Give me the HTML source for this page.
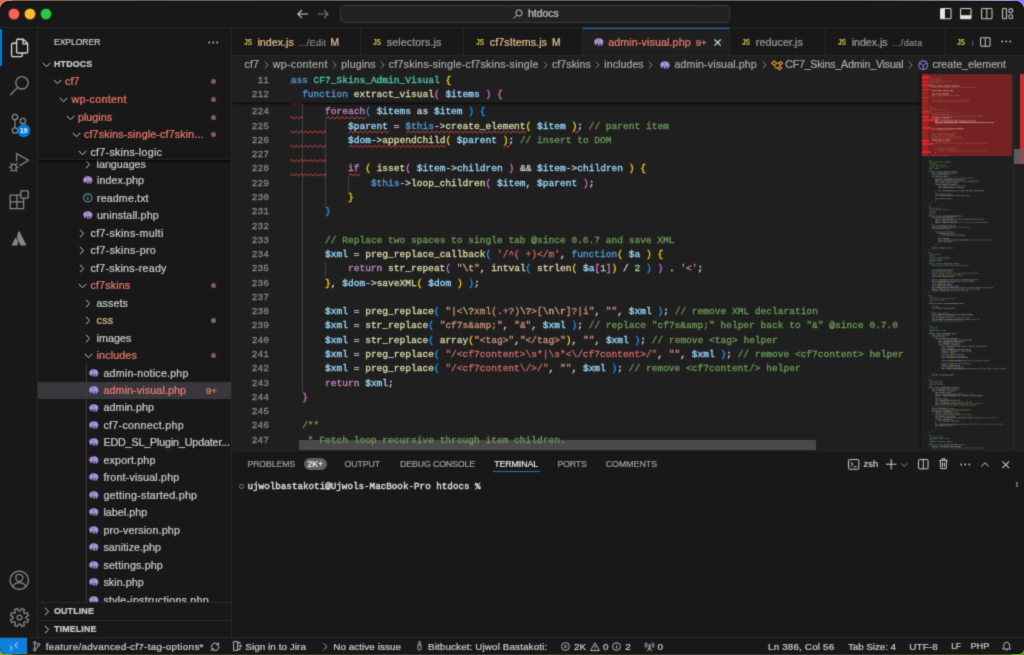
<!DOCTYPE html>
<html><head><meta charset="utf-8"><title>htdocs</title>
<style>
*{box-sizing:border-box;margin:0;padding:0}
html,body{width:1024px;height:655px;overflow:hidden;background:#1b1b1b}
body{font-family:"Liberation Sans",sans-serif;font-size:10.3px;color:#cccccc;position:relative;-webkit-font-smoothing:antialiased;-webkit-text-stroke:0.22px}
#wall{position:absolute;left:0;top:0;width:1024px;height:655px;
 background:linear-gradient(to right,#8a5a52 0px,#6e5a5a 60px,#5e5a60 300px,#5c5c66 700px,#66667e 900px,#8c8cae 985px,#9a9cc8 1010px,#7a80e0 1024px);}
#wall:after{content:"";position:absolute;left:0;top:600px;width:1024px;height:55px;background:linear-gradient(to right,#3f5f28 0px,#2c3d1c 40px,#2a3a1a 900px,#36521f 1000px,#4a7a25 1024px)}
.corner{position:absolute;width:12px;height:12px}
#win{position:absolute;left:0px;top:1px;width:1024px;height:653px;background:#1f1f1f;border-radius:9px 9px 6px 6px;overflow:hidden;filter:url(#soft)}
.abs{position:absolute}
svg{display:block;overflow:visible}
/* title bar */
#titlebar{position:absolute;left:0;top:0;width:1024px;height:27px;background:#181818;border-bottom:1px solid #282828}
.tl{position:absolute;top:8px;width:10px;height:10px;border-radius:50%}
#cmd{position:absolute;left:340px;top:4px;width:390px;height:18px;border:1px solid #3a3a3a;border-radius:5px;background:#222222}
/* activity bar */
#activity{position:absolute;left:0;top:27px;width:38px;height:609px;background:#181818;border-right:1px solid #282828}
/* status */
#status{position:absolute;left:0;top:636px;width:1024px;height:18px;background:#181818;border-top:1px solid #282828;font-size:10.2px;color:#cccccc;white-space:nowrap}
#status .it{position:absolute;top:0;height:17px;line-height:17px;font-size:9.9px}
/* sidebar */
#sidebar{position:absolute;left:38px;top:27px;width:194px;height:609px;background:#181818;border-right:1px solid #282828;overflow:hidden}
#treeclip{position:absolute;left:0;top:0;width:193px;height:574.5px;overflow:hidden}
#sticky{position:absolute;left:0;top:27px;width:193px;height:105.2px;background:#181818;box-shadow:0 1.5px 2px rgba(0,0,0,0.55);border-bottom:1px solid #232323}
#sticky .row{margin-top:-27px}
.row{position:absolute;left:0;width:193px;height:17.5px;white-space:nowrap}
.row .lbl,.lbl{position:absolute;top:0;line-height:17.4px;font-size:10.7px;letter-spacing:0.25px}
.lbl.hd{font-size:8.9px;letter-spacing:0.15px}
.row .ch{position:absolute;left:0;top:6px}
.row .ch.cr{left:1.5px;top:4.2px}
.row .ic{position:absolute;left:0;top:4.1px}
.row .dot{position:absolute;left:173px;top:6.2px;width:5px;height:5px;border-radius:50%}
/* tabs */
#tabs{position:absolute;left:232px;top:27px;width:792px;height:28px;background:#181818;border-bottom:1px solid #282828;white-space:nowrap;overflow:hidden}
.tab{position:absolute;top:0;height:28px;border-right:1px solid #282828;background:#181818}
.tab.act{background:#1f1f1f;border-top:1px solid #1b72bd;height:28px}
#tabs .js{position:absolute;top:0;line-height:28.6px;font-size:9.2px;font-weight:bold;color:#cbcb41;letter-spacing:-0.3px;-webkit-text-stroke:0;transform:scaleX(0.74);transform-origin:left center}
#tabs .tl2{position:absolute;top:0;line-height:29px;font-size:10.7px;letter-spacing:0.25px}
#tabs .td{position:absolute;top:0;line-height:30px;font-size:8.9px;color:#8a8a8a;letter-spacing:0.15px}
/* breadcrumb */
#bc{position:absolute;left:232px;top:55px;width:792px;height:18px;background:#1f1f1f;white-space:nowrap;overflow:hidden}
#bc .b{position:absolute;top:0;line-height:17.4px;font-size:10.6px;color:#a9a9a9}
#bc .sep{position:absolute;top:5.6px;width:5px;height:8px}
#bc .sep:before{content:"";position:absolute;left:-1px;top:1.2px;width:4.6px;height:4.6px;border-right:1px solid #8c8c8c;border-top:1px solid #8c8c8c;transform:rotate(45deg)}
/* minimap */
#minimap{position:absolute;left:921px;top:73px;width:92px;height:376px;background:#1f1f1f;overflow:hidden;box-shadow:-1px 0 1.5px rgba(0,0,0,0.45)}
#vscroll{position:absolute;left:1012.5px;top:73px;width:11.5px;height:376px;background:#1f1f1f;border-left:1px solid #2a2a2a}
/* panel */
#panel{position:absolute;left:232px;top:448.5px;width:792px;height:188px;background:#181818;border-top:1px solid #232323;overflow:hidden;white-space:nowrap}
#panel .pt{position:absolute;top:6.3px;line-height:14px;font-size:8.8px}

/* editor */
#editor{position:absolute;left:232px;top:73px;width:792px;height:376px;background:#1f1f1f;overflow:hidden;font-family:"Liberation Mono",monospace;font-size:9.558px;line-height:14.28px}
#gutter{position:absolute;left:0;top:0;width:57px;height:376px}
.ln{position:absolute;left:0;width:37px;text-align:right;color:#84878c;-webkit-text-stroke:0.3px;height:14.28px;white-space:pre}
#code{position:absolute;left:57.5px;top:0;width:631.5px;height:376px;overflow:hidden}
.cl{position:absolute;white-space:pre;color:#d4d4d4;height:14.28px;-webkit-text-stroke:0.3px}
.ig{position:absolute;width:0.8px}
#stickyed{position:absolute;left:0;top:0;width:689px;height:28.76px;background:#1f1f1f;box-shadow:0 1px 2px rgba(0,0,0,0.8);border-bottom:1px solid #161616}
#stcode{position:absolute;left:57.5px;top:0;width:631.5px;height:28.56px;overflow:hidden}

</style></head>
<body>
<svg width="0" height="0" style="position:absolute"><filter id="soft" x="0" y="0" width="100%" height="100%" color-interpolation-filters="sRGB"><feConvolveMatrix order="3" kernelMatrix="1 4 1 4 20 4 1 4 1" divisor="40" edgeMode="duplicate" preserveAlpha="true"/></filter></svg>
<div id="wall"></div>
<div class="corner" style="left:0;top:0;background:#d9735c"></div><div class="corner" style="right:0;top:0;background:#7f86f0"></div><div class="corner" style="left:0;bottom:0;background:#6fae3a"></div><div class="corner" style="right:0;bottom:0;background:#5a9a2c"></div>
<div id="win">
<div id="titlebar">
 <div class="tl" style="left:8.5px;background:#fe5f57;box-shadow:0 0 0 0.5px #d94b43"></div>
 <div class="tl" style="left:24.5px;background:#febc2e;box-shadow:0 0 0 0.5px #d69e20"></div>
 <div class="tl" style="left:40.5px;background:#28c840;box-shadow:0 0 0 0.5px #1ea230"></div>
 <svg class="abs" style="left:297px;top:8px" width="12" height="10" viewBox="0 0 12 10"><path d="M5 0.8 L0.9 5 L5 9.2 M1 5 H11" fill="none" stroke="#cccccc" stroke-width="1.1"/></svg>
 <svg class="abs" style="left:317px;top:8px" width="12" height="10" viewBox="0 0 12 10"><path d="M7 0.8 L11.1 5 L7 9.2 M11 5 H1" fill="none" stroke="#7a7a7a" stroke-width="1.1"/></svg>
 <div id="cmd"></div>
 <svg class="abs" style="left:513px;top:8px" width="10" height="10" viewBox="0 0 10 10"><circle cx="6" cy="4" r="3.1" fill="none" stroke="#cccccc" stroke-width="0.9"/><path d="M3.8 6.2 L0.6 9.4" stroke="#cccccc" stroke-width="0.9"/></svg>
 <div class="abs" style="left:528px;top:7px;font-size:10.4px;line-height:12px;color:#cccccc">htdocs</div>

 <svg class="abs" style="left:939.5px;top:6.9px" width="11.6" height="11.4" viewBox="0 0 11.6 11.4"><rect x="0.55" y="0.55" width="10.5" height="10.3" rx="1" fill="none" stroke="#d8d8d8" stroke-width="1.05"/><rect x="0.55" y="0.55" width="4.4" height="10.3" fill="#e6e6e6"/></svg>
 <svg class="abs" style="left:960.1px;top:6.9px" width="11.6" height="11.4" viewBox="0 0 11.6 11.4"><rect x="0.55" y="0.55" width="10.5" height="10.3" rx="1" fill="none" stroke="#d8d8d8" stroke-width="1.05"/><rect x="0.55" y="7.2" width="10.5" height="3.7" fill="#e6e6e6"/></svg>
 <svg class="abs" style="left:980.7px;top:6.9px" width="11.6" height="11.4" viewBox="0 0 11.6 11.4"><rect x="0.55" y="0.55" width="10.5" height="10.3" rx="1" fill="none" stroke="#c4c4c4" stroke-width="1.05"/><path d="M5.8 0.6 V10.8" stroke="#c4c4c4" stroke-width="1.05"/></svg>
 <svg class="abs" style="left:1001.8px;top:6.9px" width="11.4" height="11.4" viewBox="0 0 11.4 11.4"><rect x="0.55" y="0.55" width="3.9" height="10.3" rx="0.6" fill="none" stroke="#c4c4c4" stroke-width="1.05"/><rect x="6.9" y="0.9" width="3.7" height="3.7" rx="1.2" fill="none" stroke="#c4c4c4" stroke-width="1.05"/><rect x="6.9" y="6.8" width="3.7" height="3.7" rx="1.2" fill="none" stroke="#c4c4c4" stroke-width="1.05"/></svg>
</div>

<div id="activity">
 <div class="abs" style="left:0;top:1px;width:1.6px;height:37px;background:#0078d4"></div>
 <!-- explorer (files) -->
 <svg class="abs" style="left:9.5px;top:10px" width="19" height="20" viewBox="0 0 19 20"><path d="M7 1.2 H13.2 L17.6 5.6 V14 Q17.6 15 16.6 15 H7.6 Q6.6 15 6.6 14 V2.2 Q6.6 1.2 7.6 1.2 M13 1.4 V5.8 H17.4" fill="none" stroke="#d7d7d7" stroke-width="1.35" stroke-linejoin="round"/><path d="M6.4 5.2 H2.6 Q1.6 5.2 1.6 6.2 V17.6 Q1.6 18.6 2.6 18.6 H11.2 Q12.2 18.6 12.2 17.6 V15.2" fill="none" stroke="#d7d7d7" stroke-width="1.35" stroke-linejoin="round"/></svg>
 <!-- search -->
 <svg class="abs" style="left:9px;top:46px" width="21" height="22" viewBox="0 0 21 22"><circle cx="13" cy="8.8" r="6.2" fill="none" stroke="#868686" stroke-width="1.35"/><path d="M8.7 13.4 L1.3 21" stroke="#868686" stroke-width="1.35" fill="none"/></svg>
 <!-- source control -->
 <svg class="abs" style="left:9px;top:83px" width="24" height="28" viewBox="0 0 24 28"><circle cx="6" cy="6" r="2.7" fill="none" stroke="#868686" stroke-width="1.3"/><circle cx="6" cy="19.5" r="2.7" fill="none" stroke="#868686" stroke-width="1.3"/><circle cx="13.9" cy="10" r="2.7" fill="none" stroke="#868686" stroke-width="1.3"/><path d="M6 8.8 V16.8 M13.9 12.8 Q13.5 16 8.3 17.6" fill="none" stroke="#868686" stroke-width="1.3"/><circle cx="14.8" cy="19.6" r="6.6" fill="#0078d4"/><text x="14.8" y="22.1" font-family="Liberation Sans" font-size="6.8" font-weight="bold" fill="#ffffff" text-anchor="middle">19</text></svg>
 <!-- run and debug -->
 <svg class="abs" style="left:8px;top:123px" width="24" height="24" viewBox="0 0 24 24"><path d="M8.6 10.2 V2.6 L20.6 9.3 L11.6 14.6" fill="none" stroke="#868686" stroke-width="1.3" stroke-linejoin="round"/><ellipse cx="5.8" cy="16.4" rx="2.6" ry="3.3" fill="none" stroke="#868686" stroke-width="1.2"/><path d="M3.6 13.6 L2.2 12.2 M8 13.6 L9.4 12.2 M3.2 16.4 H1 M8.4 16.4 H10.6 M3.6 19 L2.2 20.6 M8 19 L9.4 20.6" stroke="#868686" stroke-width="1.1" fill="none"/></svg>
 <!-- extensions -->
 <svg class="abs" style="left:9px;top:162px" width="21" height="20" viewBox="0 0 21 20"><path d="M1.2 5.2 H14.6 V18.6 H1.2 Z M7.9 5.2 V18.6 M1.2 11.9 H14.6" fill="none" stroke="#868686" stroke-width="1.3"/><rect x="11.8" y="0.8" width="7.4" height="7.4" rx="0.6" fill="#181818" stroke="#868686" stroke-width="1.3"/></svg>
 <!-- atlassian -->
 <svg class="abs" style="left:11px;top:203px" width="16" height="15" viewBox="0 0 16 15"><path d="M5.1 6.7 C4.85 6.4 4.45 6.45 4.3 6.75 L0.7 13.9 C0.55 14.2 0.75 14.5 1.05 14.5 H6 C6.2 14.5 6.35 14.4 6.4 14.25 C7.5 12.05 6.85 8.7 5.1 6.7 Z" fill="#868686"/><path d="M7.7 0.5 C5.7 3.6 5.85 7.05 7.15 9.65 L9.55 14.25 C9.65 14.4 9.8 14.5 9.95 14.5 H14.95 C15.3 14.5 15.45 14.2 15.3 13.9 L8.5 0.5 C8.35 0.2 7.9 0.2 7.7 0.5 Z" fill="#868686"/></svg>
 <!-- account -->
 <svg class="abs" style="left:9px;top:542px" width="21" height="21" viewBox="0 0 21 21"><circle cx="10.3" cy="10.3" r="9.2" fill="none" stroke="#868686" stroke-width="1.3"/><circle cx="10.3" cy="7.8" r="3.5" fill="none" stroke="#868686" stroke-width="1.3"/><path d="M3.9 16.8 C5 13.2 7.6 12.6 10.3 12.6 C13 12.6 15.6 13.2 16.7 16.8" fill="none" stroke="#868686" stroke-width="1.3"/></svg>
 <!-- settings gear -->
 <svg class="abs" style="left:8.5px;top:579.4px" width="21" height="21" viewBox="-10.5 -10.5 21 21"><g fill="none" stroke="#868686" stroke-width="1.3" stroke-linejoin="round"><path d="M6.54 0.87 L9.07 2.05 L7.87 4.96 L5.24 4.01 L4.01 5.24 L4.96 7.87 L2.05 9.07 L0.87 6.54 L-0.87 6.54 L-2.05 9.07 L-4.96 7.87 L-4.01 5.24 L-5.24 4.01 L-7.87 4.96 L-9.07 2.05 L-6.54 0.87 L-6.54 -0.87 L-9.07 -2.05 L-7.87 -4.96 L-5.24 -4.01 L-4.01 -5.24 L-4.96 -7.87 L-2.05 -9.07 L-0.87 -6.54 L0.87 -6.54 L2.05 -9.07 L4.96 -7.87 L4.01 -5.24 L5.24 -4.01 L7.87 -4.96 L9.07 -2.05 L6.54 -0.87 Z"/><circle cx="0" cy="0" r="2.4"/></g></svg>
</div>

<div id="sidebar">
<div class="abs" style="left:16px;top:8px;font-size:8.5px;line-height:12px;color:#cccccc;letter-spacing:0px">EXPLORER</div>
<svg class="abs" style="left:170px;top:12.8px" width="11" height="3" viewBox="0 0 11 3"><circle cx="1.2" cy="1.5" r="0.9" fill="#c5c5c5"/><circle cx="5.2" cy="1.5" r="0.9" fill="#c5c5c5"/><circle cx="9.2" cy="1.5" r="0.9" fill="#c5c5c5"/></svg>
<div id="treeclip">
<div class="row" style="top:127.68px"><span class="abs" style="left:45.8px;top:0;width:9px;height:17.5px"><svg class="ch cr" width="6" height="9" viewBox="0 0 6 9"><path d="M0.9 0.8 L4.7 4.5 L0.9 8.2" fill="none" stroke="#c5c5c5" stroke-width="1"/></svg></span><span class="lbl" style="left:58.6px;color:#cccccc;letter-spacing:-0.003px">languages</span></div>
<div class="row" style="top:144.35px"><span class="abs" style="left:44.5px;top:0;width:9px;height:17.5px"><svg class="ic" width="9.6" height="7.6" viewBox="0.3 0.2 8.8 7.2" preserveAspectRatio="none"><path d="M0.5 4 C0.5 1.6 2.2 0.4 4.7 0.4 C7.2 0.4 8.9 1.6 8.9 4 V5.4 H7.9 V7.2 H6.3 V4.9 H5.5 V7.2 H3.9 V4.9 H3.1 V5.6 C3.1 6.6 2.4 7.1 1.6 6.9 V5.9 C1 5.7 0.5 5 0.5 4 Z" fill="#ad92dc"/><path d="M3.4 1.5 C4.9 1.7 5 3.7 3.7 4.3" fill="none" stroke="#3a3050" stroke-width="0.55" opacity="0.7"/></svg></span><span class="lbl" style="left:59.0px;color:#cccccc;letter-spacing:0.071px">index.php</span></div>
<div class="row" style="top:161.82px"><span class="abs" style="left:44.5px;top:0;width:9px;height:17.5px"><svg class="ic" width="9.6" height="9.6" viewBox="0 0 9 9" style="top:3.6px"><circle cx="4.5" cy="4.5" r="3.9" fill="none" stroke="#5f9fbc" stroke-width="0.95"/><path d="M4.5 4 V6.8 M4.5 2.2 V3.1" stroke="#5f9fbc" stroke-width="1"/></svg></span><span class="lbl" style="left:59.0px;color:#cccccc;letter-spacing:0.120px">readme.txt</span></div>
<div class="row" style="top:179.29px"><span class="abs" style="left:44.5px;top:0;width:9px;height:17.5px"><svg class="ic" width="9.6" height="7.6" viewBox="0.3 0.2 8.8 7.2" preserveAspectRatio="none"><path d="M0.5 4 C0.5 1.6 2.2 0.4 4.7 0.4 C7.2 0.4 8.9 1.6 8.9 4 V5.4 H7.9 V7.2 H6.3 V4.9 H5.5 V7.2 H3.9 V4.9 H3.1 V5.6 C3.1 6.6 2.4 7.1 1.6 6.9 V5.9 C1 5.7 0.5 5 0.5 4 Z" fill="#ad92dc"/><path d="M3.4 1.5 C4.9 1.7 5 3.7 3.7 4.3" fill="none" stroke="#3a3050" stroke-width="0.55" opacity="0.7"/></svg></span><span class="lbl" style="left:59.0px;color:#cccccc;letter-spacing:0.137px">uninstall.php</span></div>
<div class="row" style="top:196.76px"><span class="abs" style="left:39.5px;top:0;width:9px;height:17.5px"><svg class="ch cr" width="6" height="9" viewBox="0 0 6 9"><path d="M0.9 0.8 L4.7 4.5 L0.9 8.2" fill="none" stroke="#c5c5c5" stroke-width="1"/></svg></span><span class="lbl" style="left:52.5px;color:#cccccc;letter-spacing:0.320px">cf7-skins-multi</span></div>
<div class="row" style="top:214.23px"><span class="abs" style="left:39.5px;top:0;width:9px;height:17.5px"><svg class="ch cr" width="6" height="9" viewBox="0 0 6 9"><path d="M0.9 0.8 L4.7 4.5 L0.9 8.2" fill="none" stroke="#c5c5c5" stroke-width="1"/></svg></span><span class="lbl" style="left:52.5px;color:#cccccc;letter-spacing:0.341px">cf7-skins-pro</span></div>
<div class="row" style="top:231.70px"><span class="abs" style="left:39.5px;top:0;width:9px;height:17.5px"><svg class="ch cr" width="6" height="9" viewBox="0 0 6 9"><path d="M0.9 0.8 L4.7 4.5 L0.9 8.2" fill="none" stroke="#c5c5c5" stroke-width="1"/></svg></span><span class="lbl" style="left:52.5px;color:#cccccc;letter-spacing:0.249px">cf7-skins-ready</span></div>
<div class="row" style="top:249.17px"><span class="abs" style="left:39.5px;top:0;width:9px;height:17.5px"><svg class="ch" width="9" height="6" viewBox="0 0 9 6"><path d="M0.8 0.9 L4.5 4.7 L8.2 0.9" fill="none" stroke="#c5c5c5" stroke-width="1"/></svg></span><span class="lbl" style="left:52.5px;color:#f07c6e;letter-spacing:0.149px">cf7skins</span><span class="dot" style="background:#8a5a52"></span></div>
<div class="row" style="top:266.64px"><span class="abs" style="left:45.8px;top:0;width:9px;height:17.5px"><svg class="ch cr" width="6" height="9" viewBox="0 0 6 9"><path d="M0.9 0.8 L4.7 4.5 L0.9 8.2" fill="none" stroke="#c5c5c5" stroke-width="1"/></svg></span><span class="lbl" style="left:58.6px;color:#cccccc;letter-spacing:0.068px">assets</span></div>
<div class="row" style="top:284.11px"><span class="abs" style="left:45.8px;top:0;width:9px;height:17.5px"><svg class="ch cr" width="6" height="9" viewBox="0 0 6 9"><path d="M0.9 0.8 L4.7 4.5 L0.9 8.2" fill="none" stroke="#c5c5c5" stroke-width="1"/></svg></span><span class="lbl" style="left:58.6px;color:#e2c08d;letter-spacing:0.190px">css</span><span class="dot" style="background:#7a6f5d"></span></div>
<div class="row" style="top:301.58px"><span class="abs" style="left:45.8px;top:0;width:9px;height:17.5px"><svg class="ch cr" width="6" height="9" viewBox="0 0 6 9"><path d="M0.9 0.8 L4.7 4.5 L0.9 8.2" fill="none" stroke="#c5c5c5" stroke-width="1"/></svg></span><span class="lbl" style="left:58.6px;color:#cccccc;letter-spacing:0.041px">images</span></div>
<div class="row" style="top:319.05px"><span class="abs" style="left:45.5px;top:0;width:9px;height:17.5px"><svg class="ch" width="9" height="6" viewBox="0 0 9 6"><path d="M0.8 0.9 L4.5 4.7 L8.2 0.9" fill="none" stroke="#c5c5c5" stroke-width="1"/></svg></span><span class="lbl" style="left:58.6px;color:#f07c6e;letter-spacing:0.135px">includes</span><span class="dot" style="background:#8a5a52"></span></div>
<div class="row" style="top:336.52px"><span class="abs" style="left:50.7px;top:0;width:9px;height:17.5px"><svg class="ic" width="9.6" height="7.6" viewBox="0.3 0.2 8.8 7.2" preserveAspectRatio="none"><path d="M0.5 4 C0.5 1.6 2.2 0.4 4.7 0.4 C7.2 0.4 8.9 1.6 8.9 4 V5.4 H7.9 V7.2 H6.3 V4.9 H5.5 V7.2 H3.9 V4.9 H3.1 V5.6 C3.1 6.6 2.4 7.1 1.6 6.9 V5.9 C1 5.7 0.5 5 0.5 4 Z" fill="#ad92dc"/><path d="M3.4 1.5 C4.9 1.7 5 3.7 3.7 4.3" fill="none" stroke="#3a3050" stroke-width="0.55" opacity="0.7"/></svg></span><span class="lbl" style="left:65.4px;color:#cccccc;letter-spacing:0.206px">admin-notice.php</span></div>
<div class="abs" style="left:0;top:353.99px;width:193px;height:17.5px;background:#37373d"></div>
<div class="row" style="top:353.99px"><span class="abs" style="left:50.7px;top:0;width:9px;height:17.5px"><svg class="ic" width="9.6" height="7.6" viewBox="0.3 0.2 8.8 7.2" preserveAspectRatio="none"><path d="M0.5 4 C0.5 1.6 2.2 0.4 4.7 0.4 C7.2 0.4 8.9 1.6 8.9 4 V5.4 H7.9 V7.2 H6.3 V4.9 H5.5 V7.2 H3.9 V4.9 H3.1 V5.6 C3.1 6.6 2.4 7.1 1.6 6.9 V5.9 C1 5.7 0.5 5 0.5 4 Z" fill="#ad92dc"/><path d="M3.4 1.5 C4.9 1.7 5 3.7 3.7 4.3" fill="none" stroke="#3a3050" stroke-width="0.55" opacity="0.7"/></svg></span><span class="lbl" style="left:65.4px;color:#f07c6e;letter-spacing:0.125px">admin-visual.php</span><span class="abs" style="left:168px;top:0;line-height:17.5px;font-size:9.6px;color:#f07c6e">9+</span></div>
<div class="row" style="top:371.46px"><span class="abs" style="left:50.7px;top:0;width:9px;height:17.5px"><svg class="ic" width="9.6" height="7.6" viewBox="0.3 0.2 8.8 7.2" preserveAspectRatio="none"><path d="M0.5 4 C0.5 1.6 2.2 0.4 4.7 0.4 C7.2 0.4 8.9 1.6 8.9 4 V5.4 H7.9 V7.2 H6.3 V4.9 H5.5 V7.2 H3.9 V4.9 H3.1 V5.6 C3.1 6.6 2.4 7.1 1.6 6.9 V5.9 C1 5.7 0.5 5 0.5 4 Z" fill="#ad92dc"/><path d="M3.4 1.5 C4.9 1.7 5 3.7 3.7 4.3" fill="none" stroke="#3a3050" stroke-width="0.55" opacity="0.7"/></svg></span><span class="lbl" style="left:65.4px;color:#cccccc;letter-spacing:0.075px">admin.php</span></div>
<div class="row" style="top:388.93px"><span class="abs" style="left:50.7px;top:0;width:9px;height:17.5px"><svg class="ic" width="9.6" height="7.6" viewBox="0.3 0.2 8.8 7.2" preserveAspectRatio="none"><path d="M0.5 4 C0.5 1.6 2.2 0.4 4.7 0.4 C7.2 0.4 8.9 1.6 8.9 4 V5.4 H7.9 V7.2 H6.3 V4.9 H5.5 V7.2 H3.9 V4.9 H3.1 V5.6 C3.1 6.6 2.4 7.1 1.6 6.9 V5.9 C1 5.7 0.5 5 0.5 4 Z" fill="#ad92dc"/><path d="M3.4 1.5 C4.9 1.7 5 3.7 3.7 4.3" fill="none" stroke="#3a3050" stroke-width="0.55" opacity="0.7"/></svg></span><span class="lbl" style="left:65.4px;color:#cccccc;letter-spacing:0.302px">cf7-connect.php</span></div>
<div class="row" style="top:406.40px"><span class="abs" style="left:50.7px;top:0;width:9px;height:17.5px"><svg class="ic" width="9.6" height="7.6" viewBox="0.3 0.2 8.8 7.2" preserveAspectRatio="none"><path d="M0.5 4 C0.5 1.6 2.2 0.4 4.7 0.4 C7.2 0.4 8.9 1.6 8.9 4 V5.4 H7.9 V7.2 H6.3 V4.9 H5.5 V7.2 H3.9 V4.9 H3.1 V5.6 C3.1 6.6 2.4 7.1 1.6 6.9 V5.9 C1 5.7 0.5 5 0.5 4 Z" fill="#ad92dc"/><path d="M3.4 1.5 C4.9 1.7 5 3.7 3.7 4.3" fill="none" stroke="#3a3050" stroke-width="0.55" opacity="0.7"/></svg></span><span class="lbl" style="left:65.4px;color:#cccccc;letter-spacing:-0.130px">EDD_SL_Plugin_Updater...</span></div>
<div class="row" style="top:423.87px"><span class="abs" style="left:50.7px;top:0;width:9px;height:17.5px"><svg class="ic" width="9.6" height="7.6" viewBox="0.3 0.2 8.8 7.2" preserveAspectRatio="none"><path d="M0.5 4 C0.5 1.6 2.2 0.4 4.7 0.4 C7.2 0.4 8.9 1.6 8.9 4 V5.4 H7.9 V7.2 H6.3 V4.9 H5.5 V7.2 H3.9 V4.9 H3.1 V5.6 C3.1 6.6 2.4 7.1 1.6 6.9 V5.9 C1 5.7 0.5 5 0.5 4 Z" fill="#ad92dc"/><path d="M3.4 1.5 C4.9 1.7 5 3.7 3.7 4.3" fill="none" stroke="#3a3050" stroke-width="0.55" opacity="0.7"/></svg></span><span class="lbl" style="left:65.4px;color:#cccccc;letter-spacing:0.168px">export.php</span></div>
<div class="row" style="top:441.34px"><span class="abs" style="left:50.7px;top:0;width:9px;height:17.5px"><svg class="ic" width="9.6" height="7.6" viewBox="0.3 0.2 8.8 7.2" preserveAspectRatio="none"><path d="M0.5 4 C0.5 1.6 2.2 0.4 4.7 0.4 C7.2 0.4 8.9 1.6 8.9 4 V5.4 H7.9 V7.2 H6.3 V4.9 H5.5 V7.2 H3.9 V4.9 H3.1 V5.6 C3.1 6.6 2.4 7.1 1.6 6.9 V5.9 C1 5.7 0.5 5 0.5 4 Z" fill="#ad92dc"/><path d="M3.4 1.5 C4.9 1.7 5 3.7 3.7 4.3" fill="none" stroke="#3a3050" stroke-width="0.55" opacity="0.7"/></svg></span><span class="lbl" style="left:65.4px;color:#cccccc;letter-spacing:0.189px">front-visual.php</span></div>
<div class="row" style="top:458.81px"><span class="abs" style="left:50.7px;top:0;width:9px;height:17.5px"><svg class="ic" width="9.6" height="7.6" viewBox="0.3 0.2 8.8 7.2" preserveAspectRatio="none"><path d="M0.5 4 C0.5 1.6 2.2 0.4 4.7 0.4 C7.2 0.4 8.9 1.6 8.9 4 V5.4 H7.9 V7.2 H6.3 V4.9 H5.5 V7.2 H3.9 V4.9 H3.1 V5.6 C3.1 6.6 2.4 7.1 1.6 6.9 V5.9 C1 5.7 0.5 5 0.5 4 Z" fill="#ad92dc"/><path d="M3.4 1.5 C4.9 1.7 5 3.7 3.7 4.3" fill="none" stroke="#3a3050" stroke-width="0.55" opacity="0.7"/></svg></span><span class="lbl" style="left:65.4px;color:#cccccc;letter-spacing:0.251px">getting-started.php</span></div>
<div class="row" style="top:476.28px"><span class="abs" style="left:50.7px;top:0;width:9px;height:17.5px"><svg class="ic" width="9.6" height="7.6" viewBox="0.3 0.2 8.8 7.2" preserveAspectRatio="none"><path d="M0.5 4 C0.5 1.6 2.2 0.4 4.7 0.4 C7.2 0.4 8.9 1.6 8.9 4 V5.4 H7.9 V7.2 H6.3 V4.9 H5.5 V7.2 H3.9 V4.9 H3.1 V5.6 C3.1 6.6 2.4 7.1 1.6 6.9 V5.9 C1 5.7 0.5 5 0.5 4 Z" fill="#ad92dc"/><path d="M3.4 1.5 C4.9 1.7 5 3.7 3.7 4.3" fill="none" stroke="#3a3050" stroke-width="0.55" opacity="0.7"/></svg></span><span class="lbl" style="left:65.4px;color:#cccccc;letter-spacing:0.057px">label.php</span></div>
<div class="row" style="top:493.75px"><span class="abs" style="left:50.7px;top:0;width:9px;height:17.5px"><svg class="ic" width="9.6" height="7.6" viewBox="0.3 0.2 8.8 7.2" preserveAspectRatio="none"><path d="M0.5 4 C0.5 1.6 2.2 0.4 4.7 0.4 C7.2 0.4 8.9 1.6 8.9 4 V5.4 H7.9 V7.2 H6.3 V4.9 H5.5 V7.2 H3.9 V4.9 H3.1 V5.6 C3.1 6.6 2.4 7.1 1.6 6.9 V5.9 C1 5.7 0.5 5 0.5 4 Z" fill="#ad92dc"/><path d="M3.4 1.5 C4.9 1.7 5 3.7 3.7 4.3" fill="none" stroke="#3a3050" stroke-width="0.55" opacity="0.7"/></svg></span><span class="lbl" style="left:65.4px;color:#cccccc;letter-spacing:0.156px">pro-version.php</span></div>
<div class="row" style="top:511.22px"><span class="abs" style="left:50.7px;top:0;width:9px;height:17.5px"><svg class="ic" width="9.6" height="7.6" viewBox="0.3 0.2 8.8 7.2" preserveAspectRatio="none"><path d="M0.5 4 C0.5 1.6 2.2 0.4 4.7 0.4 C7.2 0.4 8.9 1.6 8.9 4 V5.4 H7.9 V7.2 H6.3 V4.9 H5.5 V7.2 H3.9 V4.9 H3.1 V5.6 C3.1 6.6 2.4 7.1 1.6 6.9 V5.9 C1 5.7 0.5 5 0.5 4 Z" fill="#ad92dc"/><path d="M3.4 1.5 C4.9 1.7 5 3.7 3.7 4.3" fill="none" stroke="#3a3050" stroke-width="0.55" opacity="0.7"/></svg></span><span class="lbl" style="left:65.4px;color:#cccccc;letter-spacing:0.054px">sanitize.php</span></div>
<div class="row" style="top:528.69px"><span class="abs" style="left:50.7px;top:0;width:9px;height:17.5px"><svg class="ic" width="9.6" height="7.6" viewBox="0.3 0.2 8.8 7.2" preserveAspectRatio="none"><path d="M0.5 4 C0.5 1.6 2.2 0.4 4.7 0.4 C7.2 0.4 8.9 1.6 8.9 4 V5.4 H7.9 V7.2 H6.3 V4.9 H5.5 V7.2 H3.9 V4.9 H3.1 V5.6 C3.1 6.6 2.4 7.1 1.6 6.9 V5.9 C1 5.7 0.5 5 0.5 4 Z" fill="#ad92dc"/><path d="M3.4 1.5 C4.9 1.7 5 3.7 3.7 4.3" fill="none" stroke="#3a3050" stroke-width="0.55" opacity="0.7"/></svg></span><span class="lbl" style="left:65.4px;color:#cccccc;letter-spacing:0.163px">settings.php</span></div>
<div class="row" style="top:546.16px"><span class="abs" style="left:50.7px;top:0;width:9px;height:17.5px"><svg class="ic" width="9.6" height="7.6" viewBox="0.3 0.2 8.8 7.2" preserveAspectRatio="none"><path d="M0.5 4 C0.5 1.6 2.2 0.4 4.7 0.4 C7.2 0.4 8.9 1.6 8.9 4 V5.4 H7.9 V7.2 H6.3 V4.9 H5.5 V7.2 H3.9 V4.9 H3.1 V5.6 C3.1 6.6 2.4 7.1 1.6 6.9 V5.9 C1 5.7 0.5 5 0.5 4 Z" fill="#ad92dc"/><path d="M3.4 1.5 C4.9 1.7 5 3.7 3.7 4.3" fill="none" stroke="#3a3050" stroke-width="0.55" opacity="0.7"/></svg></span><span class="lbl" style="left:65.4px;color:#cccccc;letter-spacing:0.073px">skin.php</span></div>
<div class="row" style="top:563.63px"><span class="abs" style="left:50.7px;top:0;width:9px;height:17.5px"><svg class="ic" width="9.6" height="7.6" viewBox="0.3 0.2 8.8 7.2" preserveAspectRatio="none"><path d="M0.5 4 C0.5 1.6 2.2 0.4 4.7 0.4 C7.2 0.4 8.9 1.6 8.9 4 V5.4 H7.9 V7.2 H6.3 V4.9 H5.5 V7.2 H3.9 V4.9 H3.1 V5.6 C3.1 6.6 2.4 7.1 1.6 6.9 V5.9 C1 5.7 0.5 5 0.5 4 Z" fill="#ad92dc"/><path d="M3.4 1.5 C4.9 1.7 5 3.7 3.7 4.3" fill="none" stroke="#3a3050" stroke-width="0.55" opacity="0.7"/></svg></span><span class="lbl" style="left:65.4px;color:#cccccc;letter-spacing:0.232px">style-instructions.php</span></div>
<div class="abs" style="left:48.3px;top:336.4px;width:0.8px;height:240px;background:#3c3c3c"></div>
</div>
<div id="sticky">
<div class="row" style="top:27.75px"><span class="abs" style="left:3.5px;top:0;width:9px;height:17.5px"><svg class="ch" width="9" height="6" viewBox="0 0 9 6"><path d="M0.8 0.9 L4.5 4.7 L8.2 0.9" fill="none" stroke="#c5c5c5" stroke-width="1"/></svg></span><span class="lbl hd" style="left:16.0px;color:#cccccc"><b>HTDOCS</b></span></div>
<div class="row" style="top:45.25px"><span class="abs" style="left:14.5px;top:0;width:9px;height:17.5px"><svg class="ch" width="9" height="6" viewBox="0 0 9 6"><path d="M0.8 0.9 L4.5 4.7 L8.2 0.9" fill="none" stroke="#c5c5c5" stroke-width="1"/></svg></span><span class="lbl" style="left:27.0px;color:#f07c6e;letter-spacing:0.078px">cf7</span><span class="dot" style="background:#8a5a52"></span></div>
<div class="row" style="top:62.90px"><span class="abs" style="left:21.0px;top:0;width:9px;height:17.5px"><svg class="ch" width="9" height="6" viewBox="0 0 9 6"><path d="M0.8 0.9 L4.5 4.7 L8.2 0.9" fill="none" stroke="#c5c5c5" stroke-width="1"/></svg></span><span class="lbl" style="left:33.5px;color:#f07c6e;letter-spacing:0.297px">wp-content</span><span class="dot" style="background:#8a5a52"></span></div>
<div class="row" style="top:80.55px"><span class="abs" style="left:27.5px;top:0;width:9px;height:17.5px"><svg class="ch" width="9" height="6" viewBox="0 0 9 6"><path d="M0.8 0.9 L4.5 4.7 L8.2 0.9" fill="none" stroke="#c5c5c5" stroke-width="1"/></svg></span><span class="lbl" style="left:40.0px;color:#f07c6e;letter-spacing:0.018px">plugins</span><span class="dot" style="background:#8a5a52"></span></div>
<div class="row" style="top:98.20px"><span class="abs" style="left:33.5px;top:0;width:9px;height:17.5px"><svg class="ch" width="9" height="6" viewBox="0 0 9 6"><path d="M0.8 0.9 L4.5 4.7 L8.2 0.9" fill="none" stroke="#c5c5c5" stroke-width="1"/></svg></span><span class="lbl" style="left:46.0px;color:#f07c6e;letter-spacing:0.151px">cf7skins-single-cf7skin...</span><span class="dot" style="background:#8a5a52"></span></div>
<div class="row" style="top:115.85px"><span class="abs" style="left:40.0px;top:0;width:9px;height:17.5px"><svg class="ch" width="9" height="6" viewBox="0 0 9 6"><path d="M0.8 0.9 L4.5 4.7 L8.2 0.9" fill="none" stroke="#c5c5c5" stroke-width="1"/></svg></span><span class="lbl" style="left:52.5px;color:#cccccc;letter-spacing:0.265px">cf7-skins-logic</span></div>
</div>
<div class="abs" style="left:0;top:574.3px;width:193px;height:18px;background:#181818;border-top:1px solid #2b2b2b"><svg class="abs" style="left:5.8px;top:3.6px" width="6" height="9" viewBox="0 0 6 9"><path d="M0.9 0.8 L4.7 4.5 L0.9 8.2" fill="none" stroke="#c5c5c5" stroke-width="1"/></svg><span class="lbl hd" style="left:16px;line-height:17px"><b>OUTLINE</b></span></div>
<div class="abs" style="left:0;top:592.0px;width:193px;height:18px;background:#181818;border-top:1px solid #2b2b2b"><svg class="abs" style="left:5.8px;top:3.6px" width="6" height="9" viewBox="0 0 6 9"><path d="M0.9 0.8 L4.7 4.5 L0.9 8.2" fill="none" stroke="#c5c5c5" stroke-width="1"/></svg><span class="lbl hd" style="left:16px;line-height:17px"><b>TIMELINE</b></span></div>
</div>
<div id="tabs">
<div class="tab" style="left:0px;width:128.5px"></div>
<div class="tab" style="left:128.5px;width:103px"></div>
<div class="tab" style="left:231.5px;width:119px"></div>
<div class="tab act" style="left:350.5px;width:147px"></div>
<div class="tab" style="left:497.5px;width:96.5px"></div>
<div class="tab" style="left:594px;width:119.5px"></div>
<div class="tab" style="left:713.5px;width:80px"></div>
<span class="js" style="left:11.50px">JS</span>
<span class="tl2" style="left:25.50px;color:#e2c08d;font-size:10.7px;letter-spacing:0.000px">index.js</span>
<span class="td" style="left:66.50px;color:#8a8a8a;font-size:8.9px;letter-spacing:0.324px">.../Edit</span>
<span class="tl2" style="left:98.50px;color:#e2c08d;font-size:10.2px;letter-spacing:-0.750px">M</span>
<span class="js" style="left:141.00px">JS</span>
<span class="tl2" style="left:154.75px;color:#9d9d9d;font-size:10.7px;letter-spacing:0.107px">selectors.js</span>
<span class="js" style="left:243.50px">JS</span>
<span class="tl2" style="left:257.75px;color:#e2c08d;font-size:10.7px;letter-spacing:0.069px">cf7sItems.js</span>
<span class="tl2" style="left:320.00px;color:#e2c08d;font-size:10.2px;letter-spacing:-1.000px">M</span>
<svg class="abs" style="left:361.8px;top:10.3px" width="9.6" height="7.6" viewBox="0.3 0.2 8.8 7.2" preserveAspectRatio="none"><path d="M0.5 4 C0.5 1.6 2.2 0.4 4.7 0.4 C7.2 0.4 8.9 1.6 8.9 4 V5.4 H7.9 V7.2 H6.3 V4.9 H5.5 V7.2 H3.9 V4.9 H3.1 V5.6 C3.1 6.6 2.4 7.1 1.6 6.9 V5.9 C1 5.7 0.5 5 0.5 4 Z" fill="#ad92dc"/><path d="M3.4 1.5 C4.9 1.7 5 3.7 3.7 4.3" fill="none" stroke="#3a3050" stroke-width="0.55" opacity="0.7"/></svg>
<span class="tl2" style="left:376.25px;color:#f07c6e;font-size:10.7px;letter-spacing:0.106px">admin-visual.php</span>
<span class="tl2" style="left:463.75px;color:#f07c6e;font-size:9.6px;letter-spacing:-0.102px">9+</span>
<svg class="abs" style="left:482.4px;top:10.6px" width="7.2" height="7.2" viewBox="0 0 7 7"><path d="M0.5 0.5 L6.5 6.5 M6.5 0.5 L0.5 6.5" stroke="#e0e0e0" stroke-width="1.1"/></svg>
<span class="js" style="left:510.00px">JS</span>
<span class="tl2" style="left:523.75px;color:#9d9d9d;font-size:10.7px;letter-spacing:0.091px">reducer.js</span>
<span class="js" style="left:606.00px">JS</span>
<span class="tl2" style="left:619.75px;color:#9d9d9d;font-size:10.7px;letter-spacing:-0.062px">index.js</span>
<span class="td" style="left:660.25px;color:#8a8a8a;font-size:8.9px;letter-spacing:0.389px">.../data</span>
<span class="js" style="left:725.25px">JS</span>
<svg class="abs" style="left:738.6px;top:12.2px" width="3.4" height="6" viewBox="0 0 3.4 6"><path d="M1.7 0 V5.2 M0.3 3.8 L1.7 5.4 L3.1 3.8" fill="none" stroke="#4f5f9a" stroke-width="0.8"/></svg>
<div class="abs" style="left:742px;top:0;width:50px;height:27px;background:#181818"></div>
<svg class="abs" style="left:748.2px;top:8.8px" width="10.6" height="9.8" viewBox="0 0 11 10"><rect x="0.6" y="0.6" width="9.8" height="8.8" rx="0.8" fill="none" stroke="#c4c4c4" stroke-width="1.05"/><path d="M5.5 0.6 V9.4" stroke="#c4c4c4" stroke-width="1.05"/></svg>
<svg class="abs" style="left:768.5px;top:12.3px" width="11" height="3" viewBox="0 0 11 3"><circle cx="1.2" cy="1.5" r="0.9" fill="#c5c5c5"/><circle cx="5.2" cy="1.5" r="0.9" fill="#c5c5c5"/><circle cx="9.2" cy="1.5" r="0.9" fill="#c5c5c5"/></svg>
</div>
<div id="bc">
<span class="b" style="left:12.50px;letter-spacing:0.120px">cf7</span>
<span class="b" style="left:40.75px;letter-spacing:0.317px">wp-content</span>
<span class="b" style="left:109.25px;letter-spacing:0.132px">plugins</span>
<span class="b" style="left:156.75px;letter-spacing:0.242px">cf7skins-single-cf7skins-single</span>
<span class="b" style="left:320.00px;letter-spacing:0.059px">cf7skins</span>
<span class="b" style="left:372.25px;letter-spacing:0.078px">includes</span>
<span class="b" style="left:442.50px;letter-spacing:0.144px">admin-visual.php</span>
<span class="b" style="left:553.20px;letter-spacing:-0.182px">CF7_Skins_Admin_Visual</span>
<span class="b" style="left:700.40px;letter-spacing:0.041px">create_element</span>
<svg class="abs" style="left:32.25px;top:5.2px" width="5" height="8" viewBox="0 0 5 8"><path d="M0.7 0.6 L4.1 4 L0.7 7.4" fill="none" stroke="#8c8c8c" stroke-width="0.95"/></svg>
<svg class="abs" style="left:100.40px;top:5.2px" width="5" height="8" viewBox="0 0 5 8"><path d="M0.7 0.6 L4.1 4 L0.7 7.4" fill="none" stroke="#8c8c8c" stroke-width="0.95"/></svg>
<svg class="abs" style="left:148.40px;top:5.2px" width="5" height="8" viewBox="0 0 5 8"><path d="M0.7 0.6 L4.1 4 L0.7 7.4" fill="none" stroke="#8c8c8c" stroke-width="0.95"/></svg>
<svg class="abs" style="left:311.40px;top:5.2px" width="5" height="8" viewBox="0 0 5 8"><path d="M0.7 0.6 L4.1 4 L0.7 7.4" fill="none" stroke="#8c8c8c" stroke-width="0.95"/></svg>
<svg class="abs" style="left:363.25px;top:5.2px" width="5" height="8" viewBox="0 0 5 8"><path d="M0.7 0.6 L4.1 4 L0.7 7.4" fill="none" stroke="#8c8c8c" stroke-width="0.95"/></svg>
<svg class="abs" style="left:416.40px;top:5.2px" width="5" height="8" viewBox="0 0 5 8"><path d="M0.7 0.6 L4.1 4 L0.7 7.4" fill="none" stroke="#8c8c8c" stroke-width="0.95"/></svg>
<svg class="abs" style="left:529.50px;top:5.2px" width="5" height="8" viewBox="0 0 5 8"><path d="M0.7 0.6 L4.1 4 L0.7 7.4" fill="none" stroke="#8c8c8c" stroke-width="0.95"/></svg>
<svg class="abs" style="left:676.35px;top:5.2px" width="5" height="8" viewBox="0 0 5 8"><path d="M0.7 0.6 L4.1 4 L0.7 7.4" fill="none" stroke="#8c8c8c" stroke-width="0.95"/></svg>
<svg class="abs" style="left:428px;top:5.2px" width="9.8" height="7.8" viewBox="0.3 0.2 8.8 7.2" preserveAspectRatio="none"><path d="M0.5 4 C0.5 1.6 2.2 0.4 4.7 0.4 C7.2 0.4 8.9 1.6 8.9 4 V5.4 H7.9 V7.2 H6.3 V4.9 H5.5 V7.2 H3.9 V4.9 H3.1 V5.6 C3.1 6.6 2.4 7.1 1.6 6.9 V5.9 C1 5.7 0.5 5 0.5 4 Z" fill="#ad92dc"/><path d="M3.4 1.5 C4.9 1.7 5 3.7 3.7 4.3" fill="none" stroke="#3a3050" stroke-width="0.55" opacity="0.7"/></svg>
<svg class="abs" style="left:538.8px;top:3.6px" width="12.4" height="11" viewBox="0 0 12.4 11"><path d="M0.8 3.2 L3.2 1 L5.6 3.2 L3.2 5.4 Z M5.6 3.2 H8 M7.6 3.2 L9.6 1.4 L11.6 3.2 L9.6 5 Z M3.8 5.2 Q3.8 8 6.6 8 M6.6 8 L8.6 6.2 L10.6 8 L8.6 9.8 Z" fill="none" stroke="#ee9d28" stroke-width="1.05"/></svg>
<svg class="abs" style="left:686px;top:4px" width="10.4" height="10.4" viewBox="0 0 11 11"><circle cx="5.5" cy="5.5" r="4.6" fill="none" stroke="#8f78dd" stroke-width="1.15"/><path d="M5.5 5.5 V10 M5.5 5.5 L1.6 3.2 M5.5 5.5 L9.4 3.2" fill="none" stroke="#8f78dd" stroke-width="1.05"/></svg>
</div>
<div id="editor">
<div id="gutter">
<div class="ln" style="top:16.98px">223</div>
<div class="ln" style="top:31.26px">224</div>
<div class="ln" style="top:45.54px">225</div>
<div class="ln" style="top:59.82px">226</div>
<div class="ln" style="top:74.10px">227</div>
<div class="ln" style="top:88.38px">228</div>
<div class="ln" style="top:102.66px">229</div>
<div class="ln" style="top:116.94px">230</div>
<div class="ln" style="top:131.22px">231</div>
<div class="ln" style="top:145.50px">232</div>
<div class="ln" style="top:159.78px">233</div>
<div class="ln" style="top:174.06px">234</div>
<div class="ln" style="top:188.34px">235</div>
<div class="ln" style="top:202.62px">236</div>
<div class="ln" style="top:216.90px">237</div>
<div class="ln" style="top:231.18px">238</div>
<div class="ln" style="top:245.46px">239</div>
<div class="ln" style="top:259.74px">240</div>
<div class="ln" style="top:274.02px">241</div>
<div class="ln" style="top:288.30px">242</div>
<div class="ln" style="top:302.58px">243</div>
<div class="ln" style="top:316.86px">244</div>
<div class="ln" style="top:331.14px">245</div>
<div class="ln" style="top:345.42px">246</div>
<div class="ln" style="top:359.70px">247</div>
<div class="ln" style="top:373.98px">248</div>
</div>
<div id="code">
<div class="ig" style="left:12.34px;top:16.98px;height:299.88px;background:#404040"></div>
<div class="ig" style="left:35.28px;top:45.54px;height:85.68px;background:#404040"></div>
<div class="ig" style="left:58.22px;top:102.66px;height:14.28px;background:#404040"></div>
<div class="ig" style="left:35.28px;top:188.34px;height:14.28px;background:#404040"></div>
<div class="cl" style="left:-10.30px;top:31.26px">        <span style="color:#c586c0">foreach</span><span style="color:#179fff">(</span> <span style="color:#9cdcfe">$items</span><span style="color:#d4d4d4"> as </span><span style="color:#9cdcfe">$item</span> <span style="color:#179fff">)</span> <span style="color:#179fff">{</span></div>
<div class="cl" style="left:-10.30px;top:45.54px">            <span style="color:#9cdcfe">$parent</span><span style="color:#d4d4d4"> = </span><span style="color:#569cd6">$this</span><span style="color:#d4d4d4">-&gt;</span><span style="color:#dcdcaa">create_element</span><span style="color:#ffd700">(</span> <span style="color:#9cdcfe">$item</span> <span style="color:#ffd700">)</span><span style="color:#d4d4d4">; </span><span style="color:#6a9955">// parent item</span></div>
<div class="cl" style="left:-10.30px;top:59.82px">            <span style="color:#9cdcfe">$dom</span><span style="color:#d4d4d4">-&gt;</span><span style="color:#dcdcaa">appendChild</span><span style="color:#ffd700">(</span> <span style="color:#9cdcfe">$parent</span> <span style="color:#ffd700">)</span><span style="color:#d4d4d4">; </span><span style="color:#6a9955">// insert to DOM</span></div>
<div class="cl" style="left:-10.30px;top:74.10px"></div>
<div class="cl" style="left:-10.30px;top:88.38px">            <span style="color:#c586c0">if</span> <span style="color:#ffd700">(</span> <span style="color:#dcdcaa">isset</span><span style="color:#da70d6">(</span> <span style="color:#9cdcfe">$item</span><span style="color:#d4d4d4">-&gt;</span><span style="color:#9cdcfe">children</span> <span style="color:#da70d6">)</span><span style="color:#d4d4d4"> &amp;&amp; </span><span style="color:#9cdcfe">$item</span><span style="color:#d4d4d4">-&gt;</span><span style="color:#9cdcfe">children</span> <span style="color:#ffd700">)</span> <span style="color:#ffd700">{</span></div>
<div class="cl" style="left:-10.30px;top:102.66px">                <span style="color:#569cd6">$this</span><span style="color:#d4d4d4">-&gt;</span><span style="color:#dcdcaa">loop_children</span><span style="color:#da70d6">(</span> <span style="color:#9cdcfe">$item</span><span style="color:#d4d4d4">, </span><span style="color:#9cdcfe">$parent</span> <span style="color:#da70d6">)</span><span style="color:#d4d4d4">;</span></div>
<div class="cl" style="left:-10.30px;top:116.94px">            <span style="color:#ffd700">}</span></div>
<div class="cl" style="left:-10.30px;top:131.22px">        <span style="color:#179fff">}</span></div>
<div class="cl" style="left:-10.30px;top:145.50px"></div>
<div class="cl" style="left:-10.30px;top:159.78px">        <span style="color:#6a9955">// Replace two spaces to single tab @since 0.6.7 and save XML</span></div>
<div class="cl" style="left:-10.30px;top:174.06px">        <span style="color:#9cdcfe">$xml</span><span style="color:#d4d4d4"> = </span><span style="color:#dcdcaa">preg_replace_callback</span><span style="color:#179fff">(</span> <span style="color:#d16969">&#x27;/^( +)&lt;/m&#x27;</span><span style="color:#d4d4d4">, </span><span style="color:#569cd6">function</span><span style="color:#ffd700">(</span> <span style="color:#9cdcfe">$a</span> <span style="color:#ffd700">)</span> <span style="color:#ffd700">{</span></div>
<div class="cl" style="left:-10.30px;top:188.34px">            <span style="color:#c586c0">return</span> <span style="color:#dcdcaa">str_repeat</span><span style="color:#da70d6">(</span> <span style="color:#ce9178">&quot;</span><span style="color:#d7ba7d">\t</span><span style="color:#ce9178">&quot;</span><span style="color:#d4d4d4">, </span><span style="color:#dcdcaa">intval</span><span style="color:#179fff">(</span> <span style="color:#dcdcaa">strlen</span><span style="color:#ffd700">(</span> <span style="color:#9cdcfe">$a</span><span style="color:#da70d6">[</span><span style="color:#b5cea8">1</span><span style="color:#da70d6">]</span><span style="color:#ffd700">)</span><span style="color:#d4d4d4"> / </span><span style="color:#b5cea8">2</span> <span style="color:#179fff">)</span> <span style="color:#da70d6">)</span><span style="color:#d4d4d4"> . </span><span style="color:#ce9178">&#x27;&lt;&#x27;</span><span style="color:#d4d4d4">;</span></div>
<div class="cl" style="left:-10.30px;top:202.62px">        <span style="color:#ffd700">}</span><span style="color:#d4d4d4">, </span><span style="color:#9cdcfe">$dom</span><span style="color:#d4d4d4">-&gt;</span><span style="color:#dcdcaa">saveXML</span><span style="color:#ffd700">(</span> <span style="color:#9cdcfe">$dom</span> <span style="color:#ffd700">)</span> <span style="color:#179fff">)</span><span style="color:#d4d4d4">;</span></div>
<div class="cl" style="left:-10.30px;top:216.90px"></div>
<div class="cl" style="left:-10.30px;top:231.18px">        <span style="color:#9cdcfe">$xml</span><span style="color:#d4d4d4"> = </span><span style="color:#dcdcaa">preg_replace</span><span style="color:#179fff">(</span> <span style="color:#ce9178">&quot;|&lt;</span><span style="color:#d7ba7d">\?</span><span style="color:#ce9178">xml(.+?)</span><span style="color:#d7ba7d">\?</span><span style="color:#ce9178">&gt;[</span><span style="color:#d7ba7d">\n\r</span><span style="color:#ce9178">]?|i&quot;</span><span style="color:#d4d4d4">, </span><span style="color:#ce9178">&quot;&quot;</span><span style="color:#d4d4d4">, </span><span style="color:#9cdcfe">$xml</span> <span style="color:#179fff">)</span><span style="color:#d4d4d4">; </span><span style="color:#6a9955">// remove XML declaration</span></div>
<div class="cl" style="left:-10.30px;top:245.46px">        <span style="color:#9cdcfe">$xml</span><span style="color:#d4d4d4"> = </span><span style="color:#dcdcaa">str_replace</span><span style="color:#179fff">(</span> <span style="color:#ce9178">&quot;cf7s&amp;amp;&quot;</span><span style="color:#d4d4d4">, </span><span style="color:#ce9178">&quot;&amp;&quot;</span><span style="color:#d4d4d4">, </span><span style="color:#9cdcfe">$xml</span> <span style="color:#179fff">)</span><span style="color:#d4d4d4">; </span><span style="color:#6a9955">// replace &quot;cf7s&amp;amp;&quot; helper back to &quot;&amp;&quot; @since 0.7.0</span></div>
<div class="cl" style="left:-10.30px;top:259.74px">        <span style="color:#9cdcfe">$xml</span><span style="color:#d4d4d4"> = </span><span style="color:#dcdcaa">str_replace</span><span style="color:#179fff">(</span> <span style="color:#dcdcaa">array</span><span style="color:#ffd700">(</span><span style="color:#ce9178">&quot;&lt;tag&gt;&quot;</span><span style="color:#d4d4d4">,</span><span style="color:#ce9178">&quot;&lt;/tag&gt;&quot;</span><span style="color:#ffd700">)</span><span style="color:#d4d4d4">, </span><span style="color:#ce9178">&quot;&quot;</span><span style="color:#d4d4d4">, </span><span style="color:#9cdcfe">$xml</span> <span style="color:#179fff">)</span><span style="color:#d4d4d4">; </span><span style="color:#6a9955">// remove &lt;tag&gt; helper</span></div>
<div class="cl" style="left:-10.30px;top:274.02px">        <span style="color:#9cdcfe">$xml</span><span style="color:#d4d4d4"> = </span><span style="color:#dcdcaa">preg_replace</span><span style="color:#179fff">(</span> <span style="color:#d16969">&quot;/&lt;cf7content&gt;\s*|\s*&lt;\/cf7content&gt;/&quot;</span><span style="color:#d4d4d4">, </span><span style="color:#ce9178">&quot;&quot;</span><span style="color:#d4d4d4">, </span><span style="color:#9cdcfe">$xml</span> <span style="color:#179fff">)</span><span style="color:#d4d4d4">; </span><span style="color:#6a9955">// remove &lt;cf7content&gt; helper</span></div>
<div class="cl" style="left:-10.30px;top:288.30px">        <span style="color:#9cdcfe">$xml</span><span style="color:#d4d4d4"> = </span><span style="color:#dcdcaa">preg_replace</span><span style="color:#179fff">(</span> <span style="color:#d16969">&quot;/&lt;cf7content\/&gt;/&quot;</span><span style="color:#d4d4d4">, </span><span style="color:#ce9178">&quot;&quot;</span><span style="color:#d4d4d4">, </span><span style="color:#9cdcfe">$xml</span> <span style="color:#179fff">)</span><span style="color:#d4d4d4">; </span><span style="color:#6a9955">// remove &lt;cf7content/&gt; helper</span></div>
<div class="cl" style="left:-10.30px;top:302.58px">        <span style="color:#c586c0">return</span> <span style="color:#9cdcfe">$xml</span><span style="color:#d4d4d4">;</span></div>
<div class="cl" style="left:-10.30px;top:316.86px">    <span style="color:#da70d6">}</span></div>
<div class="cl" style="left:-10.30px;top:331.14px"></div>
<div class="cl" style="left:-10.30px;top:345.42px">    <span style="color:#6a9955">/**</span></div>
<div class="cl" style="left:-10.30px;top:359.70px">     <span style="color:#6a9955">* Fetch loop recursive through item children.</span></div>
<svg class="abs" style="left:0;top:0" width="640" height="376"><g fill="none" stroke="#e0484c" stroke-width="0.9"><path d="M-10.30 30.57 L-7.92 28.47 L-5.54 30.57 L-3.16 28.47 L-0.78 30.57 L1.60 28.47 L3.98 30.57 L6.36 28.47 L8.74 30.57 L11.12 28.47 L12.64 30.57"/><path d="M-10.30 44.85 L-7.92 42.75 L-5.54 44.85 L-3.16 42.75 L-0.78 44.85 L1.60 42.75 L3.98 44.85 L6.36 42.75 L8.74 44.85 L11.12 42.75 L12.64 44.85"/><path d="M-10.30 59.13 L-7.92 57.03 L-5.54 59.13 L-3.16 57.03 L-0.78 59.13 L1.60 57.03 L3.98 59.13 L6.36 57.03 L8.74 59.13 L11.12 57.03 L13.50 59.13 L15.88 57.03 L18.26 59.13 L20.64 57.03 L23.02 59.13 L25.40 57.03 L27.78 59.13 L30.16 57.03 L32.54 59.13 L34.92 57.03 L35.58 59.13"/><path d="M-10.30 73.41 L-7.92 71.31 L-5.54 73.41 L-3.16 71.31 L-0.78 73.41 L1.60 71.31 L3.98 73.41 L6.36 71.31 L8.74 73.41 L11.12 71.31 L13.50 73.41 L15.88 71.31 L18.26 73.41 L20.64 71.31 L23.02 73.41 L25.40 71.31 L27.78 73.41 L30.16 71.31 L32.54 73.41 L34.92 71.31 L35.58 73.41"/><path d="M-10.30 87.69 L-7.92 85.59 L-5.54 87.69 L-3.16 85.59 L-0.78 87.69 L1.60 85.59 L3.98 87.69 L6.36 85.59 L8.74 87.69 L11.12 85.59 L13.50 87.69 L15.88 85.59 L18.26 87.69 L20.64 85.59 L23.02 87.69 L25.40 85.59 L27.78 87.69 L30.16 85.59 L32.54 87.69 L34.92 85.59 L35.58 87.69"/><path d="M-10.30 101.97 L-7.92 99.87 L-5.54 101.97 L-3.16 99.87 L-0.78 101.97 L1.60 99.87 L3.98 101.97 L6.36 99.87 L8.74 101.97 L11.12 99.87 L13.50 101.97 L15.88 99.87 L18.26 101.97 L20.64 99.87 L23.02 101.97 L25.40 99.87 L27.78 101.97 L30.16 99.87 L32.54 101.97 L34.92 99.87 L35.58 101.97"/><path d="M35.58 44.85 L37.96 42.75 L40.34 44.85 L42.72 42.75 L45.10 44.85 L47.48 42.75 L49.86 44.85 L52.24 42.75 L54.62 44.85 L57.00 42.75 L59.38 44.85 L61.76 42.75 L64.14 44.85 L66.52 42.75 L68.90 44.85 L71.28 42.75 L73.66 44.85 L75.72 42.75"/><path d="M58.52 59.13 L60.90 57.03 L63.28 59.13 L65.66 57.03 L68.04 59.13 L70.42 57.03 L72.80 59.13 L75.18 57.03 L77.56 59.13 L79.94 57.03 L82.32 59.13 L84.70 57.03 L87.08 59.13 L89.46 57.03 L91.84 59.13 L94.22 57.03 L96.60 59.13 L98.66 57.03"/><path d="M115.87 59.13 L118.25 57.03 L120.63 59.13 L123.01 57.03 L125.39 59.13 L127.77 57.03 L130.15 59.13 L132.53 57.03 L134.91 59.13 L137.29 57.03 L139.67 59.13 L142.05 57.03 L144.43 59.13 L146.81 57.03 L149.19 59.13 L151.57 57.03 L153.95 59.13 L156.33 57.03 L158.71 59.13 L161.09 57.03 L163.47 59.13 L165.85 57.03 L168.23 59.13 L170.61 57.03 L172.99 59.13 L175.37 57.03 L177.75 59.13 L180.13 57.03 L182.51 59.13 L184.89 57.03 L187.27 59.13 L189.65 57.03 L192.03 59.13 L194.41 57.03 L196.79 59.13 L199.17 57.03 L201.55 59.13 L203.93 57.03 L206.31 59.13 L208.69 57.03 L211.07 59.13 L213.45 57.03 L215.83 59.13 L218.21 57.03 L220.59 59.13 L222.97 57.03 L225.35 59.13 L227.73 57.03 L230.11 59.13 L232.49 57.03 L234.87 59.13 L236.31 57.03"/><path d="M282.19 59.13 L284.56 57.03 L286.94 59.13 L287.92 57.03"/><path d="M58.52 73.41 L60.90 71.31 L63.28 73.41 L65.66 71.31 L68.04 73.41 L70.42 71.31 L72.80 73.41 L75.18 71.31 L77.56 73.41 L79.94 71.31 L82.32 73.41 L84.70 71.31 L87.08 73.41 L89.46 71.31 L91.84 73.41 L94.22 71.31 L96.60 73.41 L98.98 71.31 L101.36 73.41 L103.74 71.31 L106.12 73.41 L108.50 71.31 L110.88 73.41 L113.26 71.31 L115.64 73.41 L118.02 71.31 L120.40 73.41 L122.78 71.31 L125.16 73.41 L127.54 71.31 L129.92 73.41 L132.30 71.31 L134.68 73.41 L137.06 71.31 L139.44 73.41 L141.82 71.31 L144.20 73.41 L146.58 71.31 L148.96 73.41 L151.34 71.31 L153.72 73.41 L156.01 71.31"/><path d="M213.37 73.41 L215.75 71.31 L218.12 73.41 L219.10 71.31"/><path d="M58.52 101.97 L60.90 99.87 L63.28 101.97 L65.66 99.87 L68.04 101.97 L69.99 99.87"/></g></svg>
</div>
<div id="stickyed">
<div class="ln" style="top:0.00px">11</div>
<div class="ln" style="top:14.28px">212</div>
<div id="stcode">
<div class="cl" style="left:-10.30px;top:0.00px"><span style="color:#569cd6">class</span> <span style="color:#4ec9b0">CF7_Skins_Admin_Visual</span> <span style="color:#ffd700">{</span></div>
<div class="cl" style="left:-10.30px;top:14.28px">    <span style="color:#569cd6">function</span> <span style="color:#dcdcaa">extract_visual</span><span style="color:#da70d6">(</span> <span style="color:#9cdcfe">$items</span> <span style="color:#da70d6">)</span> <span style="color:#da70d6">{</span></div>
</div></div>
<div class="abs" style="left:66.5px;top:366px;width:517.5px;height:10.5px;background:rgba(130,130,130,0.42)"></div>
</div>
<div id="minimap">
<div class="abs" style="left:1px;top:0;width:90px;height:82px;background:#742222"></div>
<div class="abs" style="left:1px;top:0;width:5.5px;height:82px;background:#982424"></div>
<div class="abs" style="left:1px;top:2.0px;width:7px;height:3.2px;background:#d82828"></div>
<div class="abs" style="left:1px;top:6.8px;width:7px;height:1.6px;background:#d82828"></div>
<div class="abs" style="left:1px;top:10.0px;width:7px;height:1.6px;background:#d82828"></div>
<div class="abs" style="left:1px;top:14.8px;width:9px;height:1.6px;background:#d82828"></div>
<div class="abs" style="left:1px;top:22.8px;width:7px;height:1.6px;background:#d82828"></div>
<div class="abs" style="left:1px;top:37.2px;width:7px;height:1.6px;background:#d82828"></div>
<div class="abs" style="left:1px;top:42.0px;width:7px;height:1.6px;background:#d82828"></div>
<div class="abs" style="left:1px;top:45.2px;width:16px;height:1.6px;background:#d82828"></div>
<div class="abs" style="left:1px;top:53.2px;width:9px;height:1.6px;background:#d82828"></div>
<div class="abs" style="left:1px;top:66.0px;width:7px;height:1.6px;background:#d82828"></div>
<div class="abs" style="left:1px;top:69.2px;width:12px;height:1.6px;background:#d82828"></div>
<div class="abs" style="left:1px;top:77.2px;width:9px;height:1.6px;background:#d82828"></div>
<svg class="abs" style="left:0;top:0" width="92" height="376" viewBox="0 0 92 376"><g fill="none" stroke-width="1.05">
<path d="M7.8 83.4h0.8M36.2 97.7h0.8M15.7 99.3h0.8M19.6 102.4h2.4M25.9 102.4h0.8M21.2 105.6h0.8M18.0 107.2h0.8M27.5 110.4h2.4M36.2 110.4h0.8M20.4 112.0h0.8M20.4 116.7h0.8M39.4 116.7h4.7M14.1 118.3h0.8M17.2 121.5h0.8M24.4 124.7h1.6M30.7 124.7h0.8M14.1 126.3h0.8M10.9 127.8h0.8M7.8 129.4h0.8M40.9 142.1h0.8M21.2 143.7h2.4M33.0 143.7h0.8M18.8 145.3h0.8M41.7 145.3h7.1M19.6 146.9h0.8M25.9 146.9h2.4M19.6 148.5h0.8M10.9 150.1h0.8M18.0 153.2h0.8M28.3 153.2h7.1M21.2 154.8h1.6M28.3 154.8h0.8M23.6 158.0h1.6M33.0 158.0h0.8M27.5 159.6h1.6M33.0 159.6h0.8M17.2 162.8h0.8M20.4 164.4h0.8M22.0 166.0h0.8M38.6 166.0h8.7M22.8 167.5h2.4M32.2 167.5h0.8M17.2 169.1h0.8M14.1 170.7h0.8M10.9 172.3h0.8M18.0 173.9h0.8M7.8 175.5h0.8M37.8 189.8h0.8M17.2 200.9h0.8M16.4 205.7h0.8M14.9 207.2h0.8M47.3 207.2h6.3M14.1 213.6h0.8M29.1 213.6h4.0M16.4 215.2h0.8M18.0 216.8h0.8M7.8 218.4h0.8M43.3 229.5h0.8M22.8 234.2h2.4M33.8 234.2h0.8M10.9 237.4h0.8M15.7 240.6h0.8M46.5 240.6h5.5M14.9 243.8h0.8M14.9 245.4h0.8M23.6 245.4h9.5M16.4 246.9h0.8M7.8 248.5h0.8M34.6 259.6h0.8M18.0 262.8h1.6M24.4 262.8h0.8M27.5 264.4h0.8M37.0 264.4h0.8M22.0 266.0h0.8M37.8 266.0h2.4M29.1 270.8h0.8M38.6 270.8h0.8M24.3 272.3h0.8M25.1 273.9h0.8M25.1 275.5h0.8M27.5 277.1h0.8M27.5 278.7h0.8M24.3 283.5h0.8M25.1 286.6h0.8M26.7 289.8h0.8M45.7 289.8h2.4M26.7 291.4h0.8M37.0 291.4h2.4M24.3 294.6h0.8M31.5 294.6h10.3M42.5 294.6h3.2M17.2 296.2h0.8M14.1 297.8h0.8M10.9 299.3h0.8M18.0 300.9h0.8M7.8 302.5h0.8M37.8 313.6h0.8M14.9 315.2h0.8M25.1 316.8h0.8M35.4 316.8h0.8M19.6 320.0h0.8M36.2 320.0h5.5M20.4 321.6h0.8M21.2 324.8h0.8M17.2 327.9h0.8M18.8 329.5h0.8M10.9 332.7h0.8M18.0 335.9h0.8M31.5 335.9h6.3M22.0 337.5h0.8M31.5 337.5h0.8M21.2 339.0h0.8M21.2 343.8h0.8M19.6 345.4h1.6M30.7 345.4h0.8M14.1 348.6h0.8M17.2 350.2h0.8M23.6 351.7h1.6M31.5 351.7h0.8M14.1 354.9h0.8M10.9 356.5h0.8M7.8 358.1h0.8M43.3 370.8h0.8M18.0 372.4h0.8M33.8 372.4h6.3" stroke="#d4d4d4" opacity="0.55" stroke-dasharray="0.55 0.24"/>
<path d="M29.9 97.7h5.5M10.9 99.3h4.0M22.0 100.8h4.0M26.7 100.8h2.4M14.1 102.4h4.7M22.8 102.4h2.4M14.1 105.6h6.3M14.1 107.2h3.2M42.5 107.2h3.2M46.5 107.2h11.1M24.4 108.8h6.3M31.5 108.8h5.5M20.4 110.4h6.3M30.7 110.4h4.7M17.2 112.0h2.4M33.8 113.5h2.4M37.0 113.5h6.3M17.2 116.7h2.4M44.9 116.7h7.1M52.8 116.7h10.3M14.1 121.5h2.4M18.8 124.7h4.7M26.7 124.7h3.2M37.0 142.1h3.2M17.2 143.7h3.2M24.4 143.7h7.9M14.1 145.3h4.0M49.6 145.3h7.9M14.1 146.9h4.7M29.1 146.9h7.1M14.1 148.5h4.7M28.3 148.5h8.7M27.5 151.7h4.0M32.2 151.7h2.4M10.9 153.2h6.3M15.7 154.8h4.7M23.6 154.8h4.0M18.8 158.0h4.0M25.9 158.0h6.3M19.6 159.6h7.1M29.9 159.6h2.4M34.6 161.2h4.0M39.4 161.2h4.7M17.2 164.4h2.4M17.2 166.0h4.0M31.5 166.0h6.3M19.6 167.5h2.4M25.9 167.5h5.5M10.9 173.9h6.3M32.2 189.8h4.7M22.0 196.1h3.2M25.9 196.1h6.3M10.9 200.9h5.5M21.2 202.5h6.3M28.3 202.5h4.7M10.9 205.7h4.7M40.9 205.7h7.1M10.9 207.2h3.2M29.1 207.2h9.5M25.9 208.8h4.0M30.7 208.8h2.4M22.8 210.4h2.4M25.9 210.4h4.7M26.7 212.0h5.5M33.0 212.0h4.7M10.9 213.6h2.4M21.2 213.6h7.1M33.8 213.6h4.0M10.9 215.2h4.7M23.6 215.2h1.6M30.7 215.2h1.6M10.9 216.8h6.3M37.8 229.5h4.7M15.7 234.2h6.3M25.9 234.2h7.1M10.9 240.6h4.0M24.4 240.6h10.3M10.9 243.8h3.2M10.9 245.4h3.2M33.8 245.4h8.7M10.9 246.9h4.7M30.7 259.6h3.2M21.2 261.2h2.4M24.4 261.2h4.0M13.3 262.8h4.0M20.4 262.8h3.2M19.6 264.4h7.1M29.1 264.4h7.1M17.2 266.0h4.0M40.9 266.0h10.3M31.5 267.6h5.5M37.8 267.6h4.7M29.9 269.2h4.0M34.6 269.2h4.0M23.6 270.8h4.7M30.7 270.8h7.1M20.4 272.3h3.2M40.1 272.3h6.3M47.3 272.3h7.1M55.2 272.3h11.1M20.4 273.9h4.0M20.4 275.5h4.0M44.9 275.5h4.7M20.4 277.1h6.3M20.4 278.7h6.3M33.8 281.9h4.7M39.4 281.9h4.7M20.4 283.5h3.2M36.2 283.5h11.1M20.4 286.6h4.0M41.7 286.6h4.0M20.4 289.8h5.5M20.4 291.4h5.5M33.8 293.0h5.5M40.1 293.0h2.4M20.4 294.6h3.2M10.9 300.9h6.3M30.7 313.6h6.3M10.9 315.2h3.2M17.2 316.8h7.1M26.7 316.8h7.9M24.4 318.4h2.4M27.5 318.4h2.4M14.1 320.0h4.7M14.1 321.6h5.5M56.7 321.6h4.7M14.1 324.8h6.3M31.5 326.3h4.0M36.2 326.3h3.2M14.1 327.9h2.4M14.1 329.5h4.0M25.9 334.3h2.4M29.1 334.3h4.0M10.9 335.9h6.3M38.6 335.9h11.1M14.9 337.5h6.3M23.6 337.5h7.1M14.1 339.0h6.3M32.2 339.0h6.3M24.4 342.2h5.5M30.7 342.2h3.2M14.1 343.8h6.3M37.0 343.8h8.7M46.5 343.8h5.5M16.4 345.4h2.4M22.0 345.4h7.9M29.9 347.0h4.0M34.6 347.0h3.2M14.1 350.2h2.4M29.1 350.2h8.7M17.2 351.7h5.5M25.9 351.7h4.7M37.8 370.8h4.7M10.9 372.4h6.3M29.1 372.4h4.0" stroke="#a9c8dc" opacity="0.55" stroke-dasharray="0.55 0.24"/>
<path d="M22.0 97.7h7.1M17.2 99.3h10.3M15.7 100.8h5.5M22.8 105.6h9.5M19.6 107.2h4.0M18.8 108.8h4.7M22.0 112.0h4.0M22.0 113.5h11.1M22.0 116.7h11.9M18.8 121.5h14.2M22.0 142.1h14.2M20.4 145.3h12.6M21.2 146.9h4.0M21.2 148.5h6.3M15.7 151.7h11.1M19.6 153.2h7.9M25.1 161.2h8.7M22.0 164.4h6.3M23.6 166.0h7.1M19.6 173.9h5.5M22.0 189.8h9.5M15.7 196.1h5.5M18.8 200.9h4.7M15.7 202.5h4.7M18.0 205.7h8.7M16.5 207.2h11.9M15.7 208.8h9.5M15.7 210.4h6.3M15.7 212.0h10.3M15.7 213.6h4.7M18.0 215.2h4.7M19.6 216.8h8.7M22.8 229.5h14.2M17.2 240.6h6.3M16.5 243.8h7.1M16.5 245.4h6.3M18.0 246.9h4.0M22.0 259.6h7.9M15.7 261.2h4.7M23.6 266.0h13.4M22.0 267.6h8.7M22.0 269.2h7.1M25.9 272.3h13.4M26.7 273.9h6.3M26.7 275.5h7.9M29.1 277.1h7.9M29.1 278.7h4.7M25.1 281.9h7.9M25.9 283.5h9.5M26.7 286.6h14.2M28.3 289.8h4.7M28.3 291.4h7.9M25.1 293.0h7.9M25.9 294.6h4.7M19.6 300.9h13.4M20.4 313.6h9.5M16.5 315.2h7.9M18.8 318.4h4.7M21.2 320.0h14.2M22.0 321.6h14.2M22.8 324.8h4.0M18.8 326.3h11.9M18.8 327.9h7.9M20.4 329.5h8.7M15.7 334.3h9.5M19.6 335.9h11.1M22.8 339.0h8.7M18.8 342.2h4.7M22.8 343.8h13.4M22.0 347.0h7.1M18.8 350.2h9.5M22.8 370.8h14.2M19.6 372.4h8.7" stroke="#d2d2b0" opacity="0.55" stroke-dasharray="0.55 0.24"/>
<path d="M28.3 99.3h7.9M33.0 105.6h10.3M33.8 121.5h10.3M44.9 121.5h4.0M33.8 145.3h7.1M58.3 145.3h4.7M25.9 173.9h6.3M24.4 200.9h5.5M30.7 200.9h11.1M27.5 205.7h6.3M34.6 205.7h5.5M48.8 205.7h8.7M39.4 207.2h2.4M42.5 207.2h4.0M25.9 215.2h4.0M35.4 240.6h10.3M24.4 243.8h7.1M43.3 245.4h6.3M35.4 275.5h8.7M37.8 277.1h1.6M33.8 289.8h6.3M40.9 289.8h4.0M46.5 294.6h3.2M37.0 321.6h2.4M40.1 321.6h7.9M48.8 321.6h7.1M27.5 327.9h1.6M29.9 327.9h4.7M29.9 329.5h8.7M39.4 329.5h2.4" stroke="#c4a08c" opacity="0.55" stroke-dasharray="0.55 0.24"/>
<path d="M7.8 86.6h2.4M8.6 88.1h4.0M13.3 88.1h3.2M17.2 88.1h4.0M22.0 88.1h0.8M23.6 88.1h6.3M8.6 89.7h2.4M11.7 89.7h4.0M8.6 91.3h0.8M10.1 91.3h4.0M14.9 91.3h4.7M20.4 91.3h4.7M8.6 92.9h4.7M14.1 92.9h3.2M18.0 92.9h0.8M19.6 92.9h4.0M24.4 92.9h3.2M8.6 94.5h2.4M11.7 94.5h0.8M13.3 94.5h4.7M8.6 96.1h2.4M14.1 104.0h1.6M16.4 104.0h4.7M22.0 104.0h4.7M27.5 104.0h4.0M32.2 104.0h2.4M35.4 104.0h3.2M39.4 104.0h6.3M46.5 104.0h5.5M26.7 112.0h1.6M29.1 112.0h4.0M33.8 112.0h6.3M40.9 112.0h4.0M14.1 119.9h2.4M17.2 119.9h7.1M25.1 119.9h4.7M7.8 132.6h2.4M8.6 134.2h4.0M13.3 134.2h0.8M14.9 134.2h3.2M18.8 134.2h1.6M8.6 135.8h2.4M11.7 135.8h4.7M17.2 135.8h4.0M22.0 135.8h4.0M26.7 135.8h2.4M8.6 137.4h6.3M8.6 139.0h6.3M8.6 140.5h2.4M37.8 148.5h3.2M41.7 148.5h3.2M45.7 148.5h2.4M48.8 148.5h4.7M54.4 148.5h6.3M61.5 148.5h5.5M36.2 153.2h1.6M38.6 153.2h4.0M43.3 153.2h5.5M48.0 166.0h6.3M55.2 166.0h3.2M59.1 166.0h6.3M66.2 166.0h1.6M68.6 166.0h3.2M7.8 178.7h2.4M8.6 180.2h4.7M14.1 180.2h5.5M8.6 181.8h5.5M8.6 183.4h3.2M12.5 183.4h1.6M14.9 183.4h0.8M16.5 183.4h5.5M22.8 183.4h6.3M8.6 185.0h2.4M11.7 185.0h4.0M16.5 185.0h6.3M23.6 185.0h0.8M25.1 185.0h2.4M8.6 186.6h6.3M15.7 186.6h5.5M8.6 188.2h2.4M10.9 191.4h4.7M16.4 191.4h6.3M23.6 191.4h4.0M28.3 191.4h4.7M33.8 191.4h7.1M41.7 191.4h6.3M10.9 197.7h2.4M14.1 197.7h4.0M18.8 197.7h7.1M26.7 197.7h4.0M10.9 199.3h5.5M17.2 199.3h7.1M25.1 199.3h6.3M32.2 199.3h3.2M36.2 199.3h4.0M40.9 199.3h4.0M45.7 199.3h2.4M48.8 199.3h3.2M52.8 199.3h5.5M38.6 213.6h5.5M44.9 213.6h1.6M47.3 213.6h6.3M54.4 213.6h5.5M60.7 213.6h5.5M67.0 213.6h5.5M44.1 215.2h5.5M50.4 215.2h3.2M54.4 215.2h4.7M29.1 216.8h4.7M34.6 216.8h4.7M40.1 216.8h2.4M43.3 216.8h4.0M7.8 221.5h2.4M8.6 223.1h3.2M12.5 223.1h0.8M14.1 223.1h0.8M8.6 224.7h4.0M13.3 224.7h6.3M20.4 224.7h4.0M25.1 224.7h4.7M30.7 224.7h3.2M8.6 226.3h3.2M12.5 226.3h3.2M16.4 226.3h0.8M18.0 226.3h5.5M8.6 227.9h2.4M10.9 232.6h1.6M13.3 232.6h4.0M10.9 239.0h4.7M16.4 239.0h4.0M21.2 239.0h6.3M10.9 242.2h1.6M13.3 242.2h4.7M18.8 242.2h2.4M22.0 242.2h4.0M26.7 242.2h7.1M32.2 243.8h1.6M34.6 243.8h4.7M40.1 243.8h4.0M44.9 243.8h4.7M50.4 245.4h4.7M56.0 245.4h2.4M22.8 246.9h5.5M29.1 246.9h3.2M33.0 246.9h5.5M39.4 246.9h1.6M41.7 246.9h1.6M7.8 251.7h2.4M8.6 253.3h4.7M14.1 253.3h3.2M8.6 254.9h6.3M15.7 254.9h0.8M8.6 256.5h5.5M14.9 256.5h4.7M20.4 256.5h4.7M8.6 258.1h2.4M20.4 280.3h7.1M28.3 280.3h7.1M36.2 280.3h6.3M46.5 286.6h4.0M51.2 286.6h3.2M55.2 286.6h6.3M62.3 286.6h6.3M50.4 294.6h5.5M56.7 294.6h2.4M59.9 294.6h5.5M66.2 294.6h4.7M71.8 294.6h6.3M78.9 294.6h6.3M7.8 305.7h2.4M8.6 307.3h4.0M13.3 307.3h4.0M18.0 307.3h4.0M8.6 308.9h4.0M13.3 308.9h4.0M18.0 308.9h3.2M8.6 310.5h3.2M12.5 310.5h2.4M15.7 310.5h3.2M19.6 310.5h3.2M8.6 312.0h2.4M25.1 315.2h4.7M30.7 315.2h4.7M36.2 315.2h2.4M42.5 320.0h2.4M45.7 320.0h1.6M48.1 320.0h1.6M50.4 320.0h2.4M35.4 327.9h6.3M42.5 327.9h1.6M44.9 327.9h6.3M42.5 329.5h4.7M48.0 329.5h4.0M52.8 329.5h1.6M55.2 329.5h4.0M59.9 329.5h1.6M14.1 331.1h3.2M18.0 331.1h2.4M21.2 331.1h3.2M25.1 331.1h6.3M32.2 331.1h4.7M37.8 331.1h6.3M44.9 331.1h4.7M50.4 331.1h4.7M14.1 340.6h2.4M17.2 340.6h2.4M20.4 340.6h6.3M27.5 340.6h5.5M33.8 340.6h7.1M41.7 340.6h3.2M45.7 340.6h3.2M49.6 340.6h1.6M61.5 343.8h3.2M65.4 343.8h2.4M68.6 343.8h4.7M74.1 343.8h2.4M45.7 350.2h5.5M52.0 350.2h6.3M59.1 350.2h2.4M62.3 350.2h5.5M68.6 350.2h6.3M75.7 350.2h6.3M7.8 361.3h2.4M8.6 362.9h2.4M11.7 362.9h3.2M15.7 362.9h0.8M17.2 362.9h5.5M8.6 364.5h2.4M11.7 364.5h5.5M18.0 364.5h4.7M23.6 364.5h1.6M25.9 364.5h2.4M8.6 366.0h3.2M12.5 366.0h0.8M8.6 367.6h0.8M10.1 367.6h4.7M15.7 367.6h1.6M18.0 367.6h5.5M24.4 367.6h6.3M8.6 369.2h2.4M10.9 374.0h7.1M18.8 374.0h3.2M22.8 374.0h1.6M25.1 374.0h1.6M27.5 374.0h7.1M35.4 374.0h7.1M43.3 374.0h4.0M48.1 374.0h7.1M56.0 374.0h7.1" stroke="#7fa56c" opacity="0.55" stroke-dasharray="0.55 0.24"/>
<path d="M7.8 97.7h6.3M14.9 97.7h6.3M10.9 100.8h4.0M24.4 107.2h6.3M31.5 107.2h10.3M14.1 108.8h4.0M17.2 113.5h4.0M34.6 116.7h4.0M7.8 142.1h6.3M14.9 142.1h6.3M10.9 151.7h4.0M20.4 161.2h4.0M7.8 189.8h6.3M14.9 189.8h6.3M10.9 196.1h4.0M10.9 202.5h4.0M10.9 208.8h4.0M10.9 210.4h4.0M10.9 212.0h4.0M33.0 215.2h10.3M7.8 229.5h7.1M15.7 229.5h6.3M7.8 259.6h6.3M14.9 259.6h6.3M10.9 261.2h4.0M17.2 267.6h4.0M17.2 269.2h4.0M40.1 277.1h11.1M20.4 281.9h4.0M48.8 289.8h1.6M20.4 293.0h4.0M7.8 313.6h4.7M13.3 313.6h6.3M14.1 318.4h4.0M14.1 326.3h4.0M10.9 334.3h4.0M14.1 342.2h4.0M52.8 343.8h7.9M17.2 347.0h4.0M38.6 350.2h6.3M7.8 370.8h7.1M15.7 370.8h6.3" stroke="#86a8cc" opacity="0.55" stroke-dasharray="0.55 0.24"/>
<path d="M10.9 102.4h2.4M14.1 110.4h5.5M14.1 124.7h4.0M10.9 143.7h5.5M10.9 154.8h4.0M14.1 158.0h4.0M17.2 159.6h1.6M17.2 167.5h1.6M10.9 234.2h4.0M10.9 262.8h1.6M14.1 264.4h4.7M17.2 270.8h5.5M10.9 316.8h5.5M10.9 337.5h3.2M14.1 345.4h1.6M14.1 351.7h2.4" stroke="#bc9abc" opacity="0.55" stroke-dasharray="0.55 0.24"/>
<path d="M7.8 2.4h2.4M8.6 4.0h4.7M14.1 4.0h0.8M15.7 4.0h0.8M17.2 4.0h4.0M8.6 5.6h4.7M14.1 5.6h6.3M8.6 7.2h4.7M14.1 7.2h4.7M19.6 7.2h1.6M22.0 7.2h3.2M25.9 7.2h1.6M28.3 7.2h3.2M8.6 8.7h3.2M12.5 8.7h6.3M19.6 8.7h0.8M8.6 10.3h2.4M10.9 13.5h4.7M16.4 13.5h0.8M18.0 13.5h13.4M32.2 13.5h3.2M36.2 13.5h1.6M38.6 13.5h6.3M45.7 13.5h5.5M52.0 13.5h4.0M10.9 21.4h4.0M15.7 21.4h11.9M28.3 21.4h4.7M33.8 21.4h6.3M10.9 23.0h3.2M14.9 23.0h1.6M17.2 23.0h1.6M19.6 23.0h2.4M10.9 26.2h3.2M14.9 26.2h0.8M16.5 26.2h8.7M25.9 26.2h1.6M28.3 26.2h4.7M33.8 26.2h2.4M37.0 26.2h6.3M44.1 26.2h4.7M10.9 27.8h3.2M14.9 27.8h1.6M17.2 27.8h5.5M23.6 27.8h7.1M31.5 27.8h6.3M38.6 27.8h3.2M42.5 27.8h3.2M46.5 27.8h1.6M7.8 29.4h0.8M7.8 32.6h2.4M8.6 34.1h2.4M11.7 34.1h2.4M8.6 35.7h1.6M10.9 35.7h0.8M12.5 35.7h4.7M18.0 35.7h6.3M25.1 35.7h1.6M27.5 35.7h0.8M8.6 37.3h2.4M7.8 38.9h4.7M13.3 38.9h6.3M20.4 38.9h12.6M33.8 38.9h5.5M40.1 38.9h0.8M10.9 40.5h7.1M18.8 40.5h5.5M25.1 40.5h4.0M10.9 42.1h7.1M18.8 42.1h4.0M23.6 42.1h4.7M29.1 42.1h4.0M33.8 42.1h7.1M41.7 42.1h3.2M45.7 42.1h6.3M52.8 42.1h2.4M56.0 42.1h6.3M14.1 45.3h4.0M18.8 45.3h12.6M32.2 45.3h4.0M37.0 45.3h2.4M14.1 50.0h4.0M18.8 50.0h8.7M28.3 50.0h2.4M31.5 50.0h4.0M10.9 53.2h0.8M10.9 56.4h2.4M14.1 56.4h2.4M17.2 56.4h4.7M22.8 56.4h4.7M28.3 56.4h1.6M10.9 59.6h3.2M14.9 59.6h0.8M16.5 59.6h7.1M24.4 59.6h9.5M10.9 61.1h4.0M15.7 61.1h6.3M22.8 61.1h5.5M29.1 61.1h5.5M10.9 62.7h2.4M14.1 62.7h4.7M19.6 62.7h1.6M22.0 62.7h3.2M25.9 62.7h6.3M33.0 62.7h2.4M36.2 62.7h4.7M10.9 64.3h6.3M18.0 64.3h0.8M19.6 64.3h4.7M25.1 64.3h8.7M34.6 64.3h2.4M37.8 64.3h4.0M42.5 64.3h1.6M14.1 67.5h6.3M21.2 67.5h0.8M22.8 67.5h6.3M14.1 69.1h3.2M18.0 69.1h0.8M19.6 69.1h6.3M26.7 69.1h4.7M32.2 69.1h11.1M44.1 69.1h4.7M49.6 69.1h5.5M56.0 69.1h2.4M59.1 69.1h3.2M63.1 69.1h3.2M14.1 73.8h1.6M16.4 73.8h1.6M18.8 73.8h1.6M21.2 73.8h4.0M25.9 73.8h7.1M33.8 73.8h4.0M14.1 75.4h1.6M16.4 75.4h6.3M23.6 75.4h2.4M26.7 75.4h7.1M34.6 75.4h0.8M17.2 77.0h5.5M23.6 77.0h0.8M25.1 77.0h14.2M40.2 77.0h4.7M45.7 77.0h4.0M50.4 77.0h5.5M56.7 77.0h4.0M61.5 77.0h3.2M65.4 77.0h1.6M10.9 80.2h0.8M10.9 81.8h4.0M15.7 81.8h0.8M17.2 81.8h8.7M26.7 81.8h2.4" stroke="#ff9a8a" opacity="0.3" stroke-dasharray="0.55 0.24"/>
<path d="M7.8 11.9h7.1M15.7 11.9h6.3M22.8 11.9h7.1M30.7 11.9h7.1M38.6 11.9h0.8M10.9 16.7h4.0M15.7 16.7h5.5M22.0 16.7h6.3M29.1 16.7h3.2M10.9 19.9h3.2M14.9 19.9h0.8M16.5 19.9h4.0M21.2 19.9h7.1M10.9 43.7h1.6M13.3 43.7h6.3M20.4 43.7h0.8M22.0 43.7h7.1M29.9 43.7h0.8M14.1 46.9h3.2M18.0 46.9h0.8M19.6 46.9h12.6M33.0 46.9h4.7M38.6 46.9h7.1M46.5 46.9h4.0M51.2 46.9h4.0M14.1 48.4h6.3M21.2 48.4h0.8M22.8 48.4h14.2M37.8 48.4h10.3M48.8 48.4h4.0M53.6 48.4h3.2M57.5 48.4h4.0M62.3 48.4h2.4M65.4 48.4h3.2M69.4 48.4h3.2M10.9 54.8h2.4M14.1 54.8h0.8M15.7 54.8h8.7M25.1 54.8h8.7M34.6 54.8h7.9M10.9 65.9h4.7M16.4 65.9h4.7M22.0 65.9h1.6M24.4 65.9h4.0M29.1 65.9h0.8M14.1 78.6h0.8" stroke="#ffd8d0" opacity="0.75" stroke-dasharray="0.55 0.24"/>
</g></svg>
</div>
<div id="vscroll"><div class="abs" style="left:6.5px;top:0;width:5px;height:75px;background:#c72e2e"></div><div class="abs" style="left:0;top:75px;width:11.5px;height:14.5px;background:#5b5b5b"></div><div class="abs" style="left:6.5px;top:75px;width:5px;height:14.5px;background:#8a5050"></div></div>
<div id="panel">
<span class="pt" style="left:15.50px;color:#9d9d9d;letter-spacing:-0.174px">PROBLEMS</span>
<span class="pt" style="left:112.50px;color:#9d9d9d;letter-spacing:-0.112px">OUTPUT</span>
<span class="pt" style="left:168.00px;color:#9d9d9d;letter-spacing:-0.135px">DEBUG CONSOLE</span>
<span class="pt" style="left:262.25px;color:#e7e7e7;letter-spacing:-0.092px">TERMINAL</span>
<span class="pt" style="left:325.50px;color:#9d9d9d;letter-spacing:-0.181px">PORTS</span>
<span class="pt" style="left:373.75px;color:#9d9d9d;letter-spacing:-0.008px">COMMENTS</span>
<div class="abs" style="left:261px;top:20.2px;width:46.5px;height:1.2px;background:#1b73c4"></div>
<div class="abs" style="left:71.5px;top:7.6px;width:23.5px;height:12px;border-radius:6px;background:#616161;color:#f8f8f8;font-size:8.4px;line-height:12.4px;text-align:center;letter-spacing:0.1px">2K+</div>
<div class="abs" style="left:7px;top:33.6px;width:5px;height:5px;border:0.9px solid #7a7a7a;border-radius:50%"></div>
<div class="abs" style="left:15.5px;top:28.5px;font-family:'Liberation Mono',monospace;font-size:9.26px;line-height:15px;color:#e4e4e4;white-space:pre;-webkit-text-stroke:0.35px">ujwolbastakoti@Ujwols-MacBook-Pro htdocs %</div>
<svg class="abs" style="left:616.0px;top:8.2px" width="11.4" height="10.8" viewBox="0 0 11.4 10.8"><rect x="0.55" y="0.55" width="10.3" height="9.7" rx="1" fill="none" stroke="#cccccc" stroke-width="1"/><path d="M2.6 3 L5 5.2 L2.6 7.4 M5.6 7.8 H8.6" fill="none" stroke="#cccccc" stroke-width="1"/></svg>
<span class="abs" style="left:631.5px;top:6.8px;font-size:9.4px;line-height:14px;color:#cccccc;letter-spacing:0.1px">zsh</span>
<svg class="abs" style="left:654.4px;top:8.5px" width="10.4" height="10.4" viewBox="0 0 10.4 10.4"><path d="M5.2 0 V10.4 M0 5.2 H10.4" stroke="#cccccc" stroke-width="1.05"/></svg>
<svg class="abs" style="left:669.4px;top:12.0px" width="6.6" height="4" viewBox="0 0 6.6 4"><path d="M0.4 0.4 L3.3 3.3 L6.2 0.4" fill="none" stroke="#a0a0a0" stroke-width="0.95"/></svg>
<svg class="abs" style="left:686.2px;top:8.4px" width="10.6" height="10.4" viewBox="0 0 10.6 10.4"><rect x="0.55" y="0.55" width="9.5" height="9.3" rx="0.8" fill="none" stroke="#cccccc" stroke-width="1"/><path d="M5.3 0.6 V9.8" stroke="#cccccc" stroke-width="1"/></svg>
<svg class="abs" style="left:706.6px;top:7.8px" width="9" height="11.4" viewBox="0 0 9 11.4"><path d="M0.4 2.4 H8.6 M3 2.2 V0.8 H6 V2.2 M1.3 2.6 L1.8 10.6 H7.2 L7.7 2.6 M3.5 4.4 V8.8 M5.5 4.4 V8.8" fill="none" stroke="#cccccc" stroke-width="1"/></svg>
<svg class="abs" style="left:727.5px;top:12.5px" width="11" height="3" viewBox="0 0 11 3"><circle cx="1.2" cy="1.5" r="0.9" fill="#c5c5c5"/><circle cx="5.3" cy="1.5" r="0.9" fill="#c5c5c5"/><circle cx="9.4" cy="1.5" r="0.9" fill="#c5c5c5"/></svg>
<svg class="abs" style="left:749.0px;top:11.2px" width="8" height="5" viewBox="0 0 8 5"><path d="M0.4 4.4 L4 0.7 L7.6 4.4" fill="none" stroke="#cccccc" stroke-width="1"/></svg>
<svg class="abs" style="left:769.7px;top:10.0px" width="7.6" height="7.6" viewBox="0 0 7.6 7.6"><path d="M0.4 0.4 L7.2 7.2 M7.2 0.4 L0.4 7.2" stroke="#cccccc" stroke-width="1.05"/></svg>
<div class="abs" style="left:783.8px;top:31.4px;width:2.2px;height:5px;background:#6a6a6a"></div>
</div>
<div id="status">
<div class="abs" style="left:0;top:0;width:27.2px;height:18px;background:#0f7fdc"></div>
<svg class="abs" style="left:9.2px;top:3.9px" width="9.4" height="9.4" viewBox="0 0 9.4 9.4"><path d="M0.6 3.6 L3.4 6.2 L0.6 8.8 M8.8 0.6 L5.8 3.3 L8.8 6" fill="none" stroke="#bfe3ff" stroke-width="1"/></svg>
<span class="it" style="left:45.75px;font-size:9.9px;letter-spacing:0.279px">feature/advanced-cf7-tag-options*</span>
<span class="it" style="left:245.25px;font-size:9.9px;letter-spacing:0.060px">Sign in to Jira</span>
<span class="it" style="left:333.25px;font-size:9.9px;letter-spacing:0.052px">No active issue</span>
<span class="it" style="left:428.00px;font-size:9.9px;letter-spacing:0.107px">Bitbucket: Ujwol Bastakoti:</span>
<span class="it" style="left:574.00px;font-size:9.9px;letter-spacing:0.000px">2K</span>
<span class="it" style="left:603.00px;font-size:9.8px;letter-spacing:0.000px">0</span>
<span class="it" style="left:625.30px;font-size:9.9px;letter-spacing:0.000px">2</span>
<span class="it" style="left:657.40px;font-size:9.9px;letter-spacing:0.000px">0</span>
<span class="it" style="left:768.00px;font-size:9.9px;letter-spacing:0.146px">Ln 386, Col 56</span>
<span class="it" style="left:848.00px;font-size:9.9px;letter-spacing:-0.078px">Tab Size: 4</span>
<span class="it" style="left:909.25px;font-size:9.9px;letter-spacing:0.153px">UTF-8</span>
<span class="it" style="left:951.20px;font-size:8.4px;letter-spacing:0.000px">LF</span>
<span class="it" style="left:970.60px;font-size:9.3px;letter-spacing:-0.175px">PHP</span>
<svg class="abs" style="left:33px;top:2.9px" width="7.4" height="10.6" viewBox="0 0 7.4 10.6"><circle cx="1.8" cy="1.8" r="1.25" fill="none" stroke="#cccccc" stroke-width="0.85"/><circle cx="1.8" cy="8.8" r="1.25" fill="none" stroke="#cccccc" stroke-width="0.85"/><circle cx="5.6" cy="3.4" r="1.25" fill="none" stroke="#cccccc" stroke-width="0.85"/><path d="M1.8 3.1 V7.5 M5.6 4.7 Q5.4 6.4 2.6 7.4" fill="none" stroke="#cccccc" stroke-width="0.85"/></svg>
<svg class="abs" style="left:209.6px;top:3.5px" width="10.4" height="9.6" viewBox="0 0 10.4 9.6"><path d="M1.6 5.6 A3.7 3.7 0 0 1 8.2 2.6 M8.8 4 A3.7 3.7 0 0 1 2.2 7 " fill="none" stroke="#cccccc" stroke-width="0.95"/><path d="M8.6 0.6 V2.9 H6.3 M1.8 9 V6.7 H4.1" fill="none" stroke="#cccccc" stroke-width="0.95"/></svg>
<svg class="abs" style="left:232.6px;top:3.3px" width="9" height="10" viewBox="0 0 9 10"><path d="M4.6 0.6 H0.6 V9.4 H4.6 M4.6 0.6 V9.4 M4.6 1.4 H7 V3.4 M7 6.6 V8.6 H4.6 M5.6 5 H8.6 M7.4 3.8 L8.6 5 L7.4 6.2" fill="none" stroke="#cccccc" stroke-width="0.9"/></svg>
<svg class="abs" style="left:322.6px;top:4.7px" width="4.8" height="7.4" viewBox="0 0 4.8 7.4"><path d="M0.5 0.5 L4.1 3.7 L0.5 6.9" fill="none" stroke="#a8a8a8" stroke-width="0.95"/></svg>
<svg class="abs" style="left:417.2px;top:2.9px" width="5" height="10.6" viewBox="0 0 5 10.6"><circle cx="2.5" cy="1.6" r="1.1" fill="none" stroke="#cccccc" stroke-width="0.8"/><path d="M1 3.8 H4 V8.4 Q2.5 10 1 8.4 Z M2.5 2.8 V3.8" fill="none" stroke="#cccccc" stroke-width="0.8"/></svg>
<svg class="abs" style="left:560.6px;top:3.8px" width="9" height="9" viewBox="0 0 9 9"><circle cx="4.5" cy="4.5" r="3.9" fill="none" stroke="#cccccc" stroke-width="0.85"/><path d="M3 3 L6 6 M6 3 L3 6" stroke="#cccccc" stroke-width="0.85"/></svg>
<svg class="abs" style="left:589.8px;top:3.6px" width="10" height="9.2" viewBox="0 0 10 9.2"><path d="M5 0.8 L9.4 8.6 H0.6 Z" fill="none" stroke="#cccccc" stroke-width="0.85" stroke-linejoin="round"/><path d="M5 3.6 V6 M5 6.8 V7.6" stroke="#cccccc" stroke-width="0.85"/></svg>
<svg class="abs" style="left:611.7px;top:3.8px" width="9" height="9" viewBox="0 0 9 9"><circle cx="4.5" cy="4.5" r="3.9" fill="none" stroke="#cccccc" stroke-width="0.85"/><path d="M4.5 4 V6.6 M4.5 2.4 V3.2" stroke="#cccccc" stroke-width="0.9"/></svg>
<svg class="abs" style="left:644.6px;top:3.5px" width="9" height="9.6" viewBox="0 0 9 9.6"><circle cx="4.5" cy="3.2" r="0.9" fill="#cccccc"/><path d="M4.5 4 L2.6 9.2 M4.5 4 L6.4 9.2 M3.4 7 H5.6 M2.4 5 A2.9 2.9 0 0 1 2.4 1.2 M6.6 5 A2.9 2.9 0 0 0 6.6 1.2 M1 6 A4.6 4.6 0 0 1 1 0.4 M8 6 A4.6 4.6 0 0 0 8 0.4" fill="none" stroke="#cccccc" stroke-width="0.75"/></svg>
<svg class="abs" style="left:1002px;top:3.1px" width="9.4" height="10.2" viewBox="0 0 9.4 10.2"><path d="M0.7 8 H8.7 L7.6 6.4 V4.2 A2.9 2.9 0 0 0 1.8 4.2 V6.4 Z M3.7 8.4 Q4.7 9.8 5.7 8.4" fill="none" stroke="#cccccc" stroke-width="0.9" stroke-linejoin="round"/></svg>
</div>
</div>
</body></html>
